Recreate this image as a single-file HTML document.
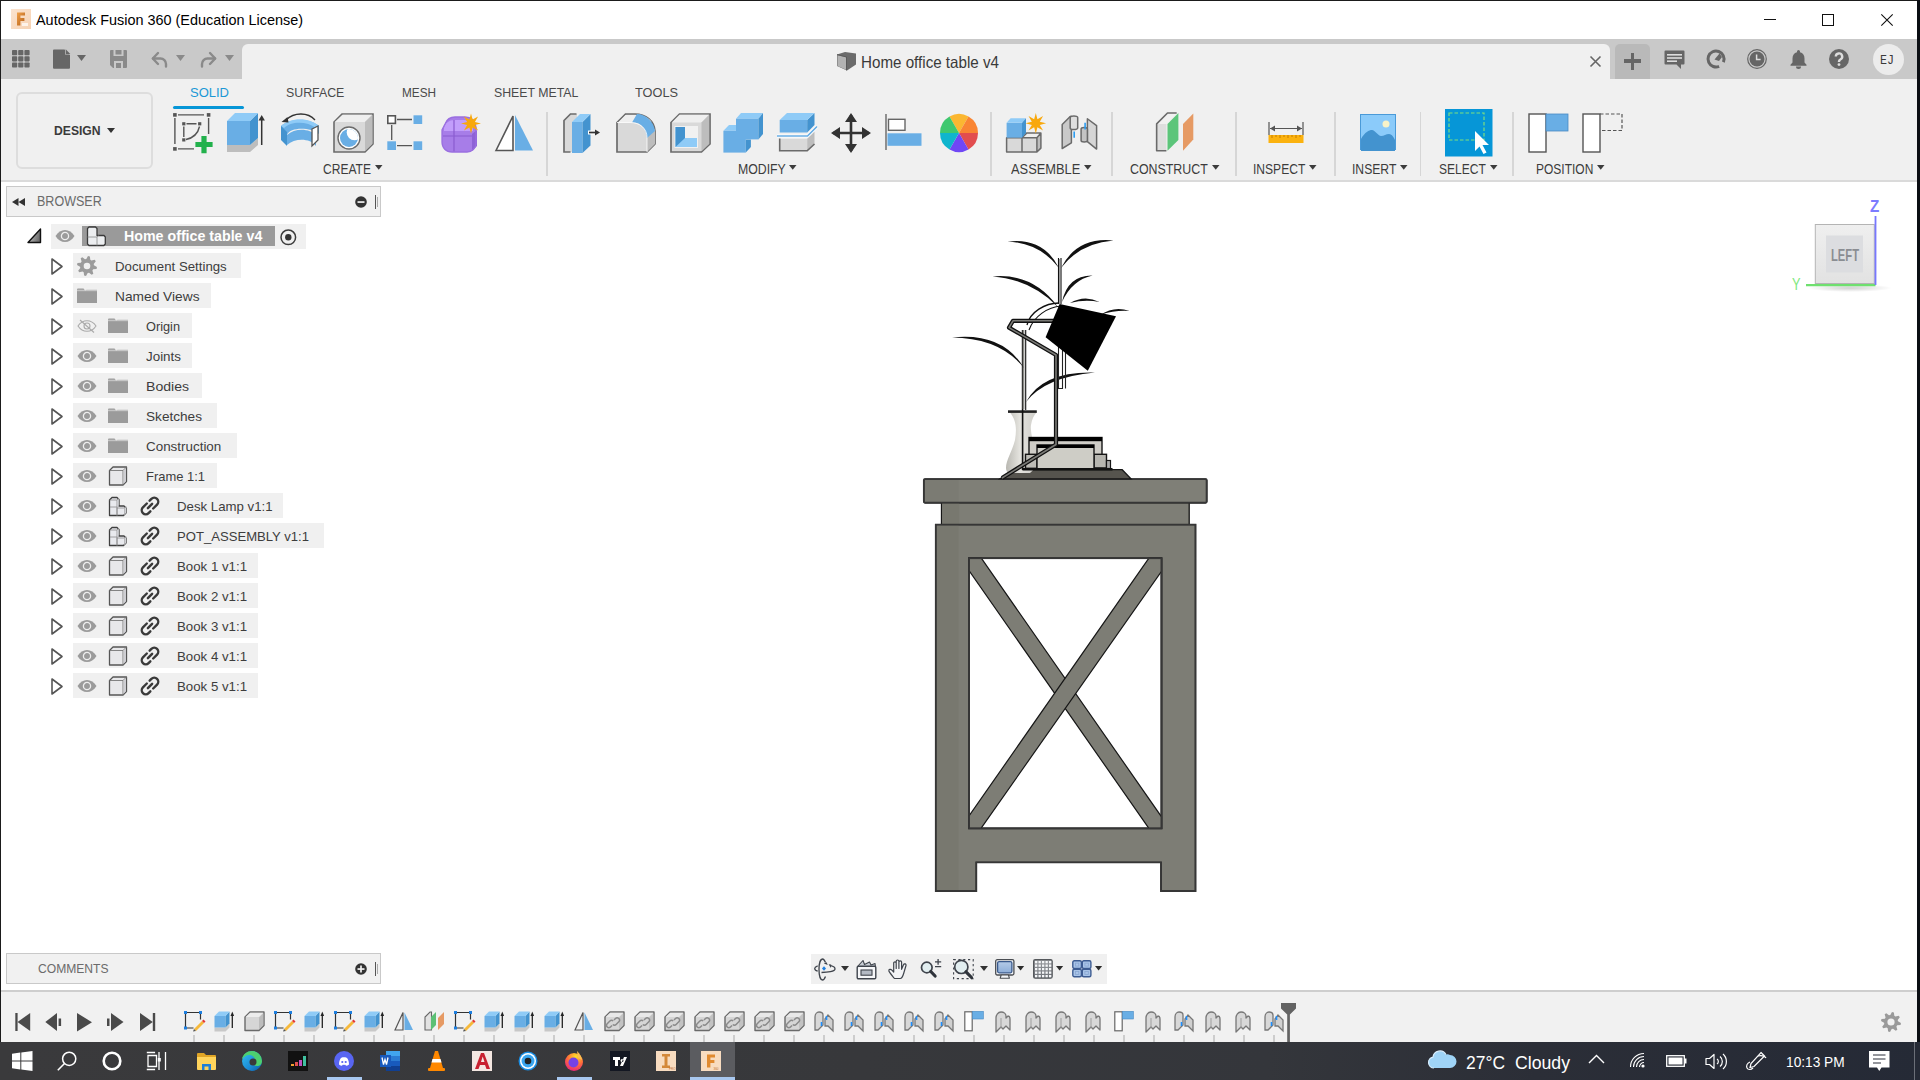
<!DOCTYPE html>
<html><head><meta charset="utf-8"><style>*{box-sizing:border-box;margin:0;padding:0}html,body{width:1920px;height:1080px;overflow:hidden;background:#fff;position:relative}svg{overflow:visible}</style></head><body>
<div style="position:absolute;left:0px;top:0px;width:1920px;height:1080px;background:#0b0e13"></div>
<div style="position:absolute;left:0px;top:0px;width:1917px;height:39px;background:#fff"></div>
<div style="position:absolute;left:0px;top:39px;width:1917px;height:40px;background:#c9c9c9"></div>
<div style="position:absolute;left:0px;top:79px;width:1917px;height:101px;background:#f0f0f0"></div>
<div style="position:absolute;left:0px;top:180px;width:1917px;height:2px;background:#dadada"></div>
<div style="position:absolute;left:0px;top:182px;width:1917px;height:808px;background:#fff"></div>
<div style="position:absolute;left:0px;top:990px;width:1917px;height:2px;background:#cecece"></div>
<div style="position:absolute;left:0px;top:992px;width:1917px;height:50px;background:#f1f1f1"></div>
<div style="position:absolute;left:0px;top:0px;width:1917px;height:1px;background:#1b1b1b"></div>
<div style="position:absolute;left:0px;top:0px;width:1px;height:1042px;background:#1b1b1b"></div>
<svg style="position:absolute;left:11px;top:9px;" width="20" height="20" viewBox="0 0 20 20"><defs><linearGradient id="fg" x1="0" y1="0" x2="1" y2="1"><stop offset="0" stop-color="#fbe3cf"/><stop offset="1" stop-color="#f6d2b3"/></linearGradient>
    <linearGradient id="fF" x1="0" y1="0" x2="1" y2="1"><stop offset="0" stop-color="#f0a04a"/><stop offset="1" stop-color="#b45f17"/></linearGradient></defs>
    <rect x="0" y="0" width="20" height="20" fill="url(#fg)"/>
    <path d="M6 3.5h8v3h-4.6v2.6h4v2.8h-4v4.6H6z" fill="url(#fF)"/>
    <rect x="11" y="14" width="6" height="3" fill="#fff" opacity=".7"/></svg>
<div style="position:absolute;left:36px;top:12.30px;font-family:'Liberation Sans',sans-serif;font-size:15px;line-height:15px;font-weight:400;color:#000;white-space:pre;transform:scaleX(0.9616);transform-origin:0 0;">Autodesk Fusion 360 (Education License)</div>
<div style="position:absolute;left:1764px;top:19px;width:12px;height:1.15px;background:#111"></div>
<div style="position:absolute;left:1822px;top:14px;width:12px;height:12px;border:1.1px solid #111"></div>
<svg style="position:absolute;left:1881px;top:14px;" width="12" height="12" viewBox="0 0 12 12"><path d="M0.3 0.3L11.7 11.7M11.7 0.3L0.3 11.7" stroke="#111" stroke-width="1.1"/></svg>
<svg style="position:absolute;left:12px;top:50px;" width="18" height="18" viewBox="0 0 18 18"><rect x="0.0" y="0.0" width="5.2" height="5.2" rx="0.8" fill="#666"/><rect x="6.2" y="0.0" width="5.2" height="5.2" rx="0.8" fill="#666"/><rect x="12.4" y="0.0" width="5.2" height="5.2" rx="0.8" fill="#666"/><rect x="0.0" y="6.2" width="5.2" height="5.2" rx="0.8" fill="#666"/><rect x="6.2" y="6.2" width="5.2" height="5.2" rx="0.8" fill="#666"/><rect x="12.4" y="6.2" width="5.2" height="5.2" rx="0.8" fill="#666"/><rect x="0.0" y="12.4" width="5.2" height="5.2" rx="0.8" fill="#666"/><rect x="6.2" y="12.4" width="5.2" height="5.2" rx="0.8" fill="#666"/><rect x="12.4" y="12.4" width="5.2" height="5.2" rx="0.8" fill="#666"/></svg>
<svg style="position:absolute;left:53px;top:49px;" width="18" height="20" viewBox="0 0 18 20"><path d="M1 0.5h10.5l5.5 5.5v12.8a1 1 0 0 1-1 1H1a1 1 0 0 1-1-1V1.5a1 1 0 0 1 1-1z" fill="#666"/><path d="M12 0.5v5h5z" fill="#c9c9c9"/><path d="M12.7 0.3l4.6 4.6h-4.6z" fill="#666"/></svg>
<svg style="position:absolute;left:77px;top:55px;" width="9" height="6" viewBox="0 0 9 6"><path d="M0 0h9L4.5 6z" fill="#666"/></svg>
<svg style="position:absolute;left:110px;top:50px;" width="17" height="18" viewBox="0 0 17 18"><path d="M0 1a1 1 0 0 1 1-1h15a1 1 0 0 1 1 1v16a1 1 0 0 1-1 1H3L0 15z" fill="#8a8a8a"/><rect x="3.5" y="0" width="10" height="6" fill="#c9c9c9"/><rect x="5.5" y="0" width="6" height="4.5" fill="#8a8a8a"/><rect x="4" y="11" width="9" height="7" fill="#c9c9c9"/><rect x="6" y="13" width="5" height="5" fill="#8a8a8a"/></svg>
<svg style="position:absolute;left:151px;top:51px;" width="17" height="16" viewBox="0 0 17 16"><path d="M2 7.5h7.5a5.5 5.5 0 0 1 5.5 5.5v2.5" fill="none" stroke="#8a8a8a" stroke-width="2.4" stroke-linecap="round"/><path d="M7 2L1.8 7.5L7 13" fill="none" stroke="#8a8a8a" stroke-width="2.4" stroke-linecap="round" stroke-linejoin="round"/></svg>
<svg style="position:absolute;left:176px;top:55px;" width="9" height="6" viewBox="0 0 9 6"><path d="M0 0h9L4.5 6z" fill="#8a8a8a"/></svg>
<svg style="position:absolute;left:200px;top:51px;" width="17" height="16" viewBox="0 0 17 16"><path d="M15 7.5H7.5A5.5 5.5 0 0 0 2 13v2.5" fill="none" stroke="#8a8a8a" stroke-width="2.4" stroke-linecap="round"/><path d="M10 2l5.2 5.5L10 13" fill="none" stroke="#8a8a8a" stroke-width="2.4" stroke-linecap="round" stroke-linejoin="round"/></svg>
<svg style="position:absolute;left:225px;top:55px;" width="9" height="6" viewBox="0 0 9 6"><path d="M0 0h9L4.5 6z" fill="#8a8a8a"/></svg>
<div style="position:absolute;left:242px;top:44px;width:1368px;height:35px;background:#f0f0f0;border-radius:6px 6px 0 0"></div>
<svg style="position:absolute;left:836px;top:51px;" width="21" height="20" viewBox="0 0 21 20"><path d="M1 3.5L9 1l11 1.5v11L11 19.5 1 15z" fill="#6b6b6b"/><path d="M1.5 4.2L10 6.3v12.5L1.5 15z" fill="#b3b3b3"/><path d="M1 3.5L10.5 6v13.5" fill="none" stroke="#555" stroke-width="0.8"/></svg>
<div style="position:absolute;left:861px;top:54.03px;font-family:'Liberation Sans',sans-serif;font-size:16.5px;line-height:16.5px;font-weight:400;color:#3a3a3a;white-space:pre;transform:scaleX(0.9192);transform-origin:0 0;">Home office table v4</div>
<svg style="position:absolute;left:1590px;top:56px;" width="11" height="11" viewBox="0 0 11 11"><path d="M0.5 0.5L10.5 10.5M10.5 0.5L0.5 10.5" stroke="#666" stroke-width="1.6"/></svg>
<div style="position:absolute;left:1615px;top:44px;width:35px;height:35px;background:#b9b9b9;border-radius:5px 5px 0 0"></div>
<div style="position:absolute;left:1624px;top:59px;width:17px;height:3.6px;background:#666"></div>
<div style="position:absolute;left:1630.7px;top:52.5px;width:3.6px;height:17px;background:#666"></div>
<svg style="position:absolute;left:1664px;top:50px;" width="21" height="20" viewBox="0 0 21 20"><path d="M0.5 1.5a1 1 0 0 1 1-1h18a1 1 0 0 1 1 1v12a1 1 0 0 1-1 1H17l0 4.5-4.5-4.5H1.5a1 1 0 0 1-1-1z" fill="#666"/><rect x="3" y="4" width="15" height="1.6" fill="#ddd"/><rect x="3" y="7.2" width="15" height="1.6" fill="#ddd"/><rect x="3" y="10.4" width="10" height="1.6" fill="#ddd"/></svg>
<svg style="position:absolute;left:1706px;top:49px;" width="20" height="20" viewBox="0 0 20 20"><circle cx="10" cy="10" r="8" fill="none" stroke="#666" stroke-width="3" stroke-dasharray="38 6" transform="rotate(110 10 10)"/><path d="M8.5 10.5l5-6 2.5 3.5-3 4z" fill="#666"/></svg>
<svg style="position:absolute;left:1747px;top:49px;" width="20" height="20" viewBox="0 0 20 20"><circle cx="10" cy="10" r="9.3" fill="none" stroke="#666" stroke-width="1.2"/><circle cx="10" cy="10" r="7.5" fill="#666"/><path d="M9.6 5.5v5h4" fill="none" stroke="#ddd" stroke-width="1.5"/></svg>
<svg style="position:absolute;left:1790px;top:49px;" width="17" height="20" viewBox="0 0 17 20"><path d="M8.5 1a1.5 1.5 0 0 1 1.5 1.5v0.7c3 .7 4.5 3.2 4.5 6.3v4l2 2.3v1H0.5v-1l2-2.3v-4c0-3.1 1.5-5.6 4.5-6.3V2.5A1.5 1.5 0 0 1 8.5 1z" fill="#666"/><path d="M6 17.5h5a2.5 2.5 0 0 1-5 0z" fill="#666"/></svg>
<svg style="position:absolute;left:1829px;top:49px;" width="20" height="20" viewBox="0 0 20 20"><circle cx="10" cy="10" r="10" fill="#666"/><path d="M6.8 7.6a3.2 3.2 0 1 1 4.6 2.9c-.9.5-1.4 1-1.4 2v.6" fill="none" stroke="#ddd" stroke-width="2.4"/><circle cx="10" cy="15.6" r="1.4" fill="#ddd"/></svg>
<div style="position:absolute;left:1872.5px;top:43.5px;width:31px;height:31px;background:#ececec;border-radius:50%"></div>
<div style="position:absolute;left:1880px;top:54.00px;font-family:'Liberation Mono',sans-serif;font-size:13px;line-height:13px;font-weight:400;color:#3a3a3a;white-space:pre;transform:scaleX(0.8969);transform-origin:0 0;">EJ</div>
<div style="position:absolute;left:15.5px;top:92px;width:137px;height:76.5px;border:2px solid #dddddd;border-radius:6px"></div>
<div style="position:absolute;left:54px;top:123.57px;font-family:'Liberation Sans',sans-serif;font-size:13.5px;line-height:13.5px;font-weight:700;color:#3a3a3a;white-space:pre;transform:scaleX(0.9002);transform-origin:0 0;">DESIGN</div>
<svg style="position:absolute;left:107px;top:128px;" width="8" height="5" viewBox="0 0 8 5"><path d="M0 0h8L4 5z" fill="#333"/></svg>
<div style="position:absolute;left:190px;top:85.87px;font-family:'Liberation Sans',sans-serif;font-size:13.5px;line-height:13.5px;font-weight:400;color:#1b98d6;white-space:pre;transform:scaleX(0.9626);transform-origin:0 0;">SOLID</div>
<div style="position:absolute;left:173px;top:106px;width:71px;height:3px;background:#0696d7;border-radius:1.5px"></div>
<div style="position:absolute;left:286.2px;top:85.87px;font-family:'Liberation Sans',sans-serif;font-size:13.5px;line-height:13.5px;font-weight:400;color:#4a4a4a;white-space:pre;transform:scaleX(0.9143);transform-origin:0 0;">SURFACE</div>
<div style="position:absolute;left:402.4px;top:85.87px;font-family:'Liberation Sans',sans-serif;font-size:13.5px;line-height:13.5px;font-weight:400;color:#4a4a4a;white-space:pre;transform:scaleX(0.8714);transform-origin:0 0;">MESH</div>
<div style="position:absolute;left:493.75px;top:85.87px;font-family:'Liberation Sans',sans-serif;font-size:13.5px;line-height:13.5px;font-weight:400;color:#4a4a4a;white-space:pre;transform:scaleX(0.9110);transform-origin:0 0;">SHEET METAL</div>
<div style="position:absolute;left:635px;top:85.87px;font-family:'Liberation Sans',sans-serif;font-size:13.5px;line-height:13.5px;font-weight:400;color:#4a4a4a;white-space:pre;transform:scaleX(0.9444);transform-origin:0 0;">TOOLS</div>
<div style="position:absolute;left:322.5px;top:162.25px;font-family:'Liberation Sans',sans-serif;font-size:14px;line-height:14px;font-weight:400;color:#3c3c3c;white-space:pre;transform:scaleX(0.8610);transform-origin:0 0;">CREATE</div>
<svg style="position:absolute;left:374.5px;top:165.3px;" width="7.5" height="4.8" viewBox="0 0 7.5 4.8"><path d="M0 0h7.5L3.75 4.8z" fill="#3c3c3c"/></svg>
<div style="position:absolute;left:737.5px;top:162.25px;font-family:'Liberation Sans',sans-serif;font-size:14px;line-height:14px;font-weight:400;color:#3c3c3c;white-space:pre;transform:scaleX(0.8778);transform-origin:0 0;">MODIFY</div>
<svg style="position:absolute;left:789.3px;top:165.3px;" width="7.5" height="4.8" viewBox="0 0 7.5 4.8"><path d="M0 0h7.5L3.75 4.8z" fill="#3c3c3c"/></svg>
<div style="position:absolute;left:1011px;top:162.25px;font-family:'Liberation Sans',sans-serif;font-size:14px;line-height:14px;font-weight:400;color:#3c3c3c;white-space:pre;transform:scaleX(0.9181);transform-origin:0 0;">ASSEMBLE</div>
<svg style="position:absolute;left:1084.3px;top:165.3px;" width="7.5" height="4.8" viewBox="0 0 7.5 4.8"><path d="M0 0h7.5L3.75 4.8z" fill="#3c3c3c"/></svg>
<div style="position:absolute;left:1130px;top:162.25px;font-family:'Liberation Sans',sans-serif;font-size:14px;line-height:14px;font-weight:400;color:#3c3c3c;white-space:pre;transform:scaleX(0.8852);transform-origin:0 0;">CONSTRUCT</div>
<svg style="position:absolute;left:1211.8px;top:165.3px;" width="7.5" height="4.8" viewBox="0 0 7.5 4.8"><path d="M0 0h7.5L3.75 4.8z" fill="#3c3c3c"/></svg>
<div style="position:absolute;left:1253px;top:162.25px;font-family:'Liberation Sans',sans-serif;font-size:14px;line-height:14px;font-weight:400;color:#3c3c3c;white-space:pre;transform:scaleX(0.8618);transform-origin:0 0;">INSPECT</div>
<svg style="position:absolute;left:1309.3px;top:165.3px;" width="7.5" height="4.8" viewBox="0 0 7.5 4.8"><path d="M0 0h7.5L3.75 4.8z" fill="#3c3c3c"/></svg>
<div style="position:absolute;left:1352px;top:162.25px;font-family:'Liberation Sans',sans-serif;font-size:14px;line-height:14px;font-weight:400;color:#3c3c3c;white-space:pre;transform:scaleX(0.8670);transform-origin:0 0;">INSERT</div>
<svg style="position:absolute;left:1400.3px;top:165.3px;" width="7.5" height="4.8" viewBox="0 0 7.5 4.8"><path d="M0 0h7.5L3.75 4.8z" fill="#3c3c3c"/></svg>
<div style="position:absolute;left:1439px;top:162.25px;font-family:'Liberation Sans',sans-serif;font-size:14px;line-height:14px;font-weight:400;color:#3c3c3c;white-space:pre;transform:scaleX(0.8592);transform-origin:0 0;">SELECT</div>
<svg style="position:absolute;left:1489.8px;top:165.3px;" width="7.5" height="4.8" viewBox="0 0 7.5 4.8"><path d="M0 0h7.5L3.75 4.8z" fill="#3c3c3c"/></svg>
<div style="position:absolute;left:1536px;top:162.25px;font-family:'Liberation Sans',sans-serif;font-size:14px;line-height:14px;font-weight:400;color:#3c3c3c;white-space:pre;transform:scaleX(0.8564);transform-origin:0 0;">POSITION</div>
<svg style="position:absolute;left:1597.3px;top:165.3px;" width="7.5" height="4.8" viewBox="0 0 7.5 4.8"><path d="M0 0h7.5L3.75 4.8z" fill="#3c3c3c"/></svg>
<div style="position:absolute;left:546.4px;top:112px;width:1.6px;height:64px;background:#d6d6d6"></div>
<div style="position:absolute;left:990.4px;top:112px;width:1.6px;height:64px;background:#d6d6d6"></div>
<div style="position:absolute;left:1111.4px;top:112px;width:1.6px;height:64px;background:#d6d6d6"></div>
<div style="position:absolute;left:1235.4px;top:112px;width:1.6px;height:64px;background:#d6d6d6"></div>
<div style="position:absolute;left:1334.4px;top:112px;width:1.6px;height:64px;background:#d6d6d6"></div>
<div style="position:absolute;left:1419.8px;top:112px;width:1.6px;height:64px;background:#d6d6d6"></div>
<div style="position:absolute;left:1512.4px;top:112px;width:1.6px;height:64px;background:#d6d6d6"></div>
<svg style="position:absolute;left:171.5px;top:111.5px;" width="42" height="42" viewBox="0 0 42 42"><g stroke="#555" stroke-width="1.4" fill="none"><path d="M6 2.9h26M2.9 6v26M36.6 6v16M6 36.9h16"/><path d="M14.5 11.8h10M11.8 14.5v10.5M14 27.5c7-1.5 12-6 13.5-13"/></g><rect x="1.0999999999999999" y="1.0999999999999999" width="3.6" height="3.6" fill="#555"/><rect x="34.800000000000004" y="1.0999999999999999" width="3.6" height="3.6" fill="#555"/><rect x="1.0999999999999999" y="35.1" width="3.6" height="3.6" fill="#555"/><rect x="10.200000000000001" y="10.200000000000001" width="3.2" height="3.2" fill="#555"/><rect x="26.099999999999998" y="10.200000000000001" width="3.2" height="3.2" fill="#555"/><rect x="10.200000000000001" y="26.299999999999997" width="3.2" height="3.2" fill="#555"/><path d="M32 24v17.2M23.4 32.5h17.2" stroke="#22b14c" stroke-width="5.2"/></svg>
<svg style="position:absolute;left:226px;top:112px;" width="42" height="42" viewBox="0 0 42 42"><path d="M1 33h23l8-7v7l-8 7H1z" fill="#bdbdbd"/><path d="M1 9h23v24H1z" fill="#69aee5"/><path d="M24 9l8-8v25l-8 7z" fill="#4393cf"/><path d="M1 9l8-8h23l-8 8z" fill="#8fcbf7"/><path d="M35.7 7v26" stroke="#333" stroke-width="1.5"/><path d="M32.5 8.5l3.2-5.5 3.2 5.5z" fill="#333"/></svg>
<svg style="position:absolute;left:280px;top:110px;" width="40" height="42" viewBox="0 0 40 42"><path d="M1 16c9-8 29-8 38 0l0 8c-9-7-29-7-32 1l0 10-6-6z" fill="#69aee5"/><path d="M1 16c10-9 28-9 38 0l-3 2c-9-7-25-7-32 0z" fill="#8fcbf7"/><path d="M1 16l6 6v14l-6-6z" fill="#4393cf"/><path d="M7 25c8-7 23-7 29 1v10c-6-8-21-8-29-1z" fill="#69aee5"/><path d="M32 19l6-3v14l-6 6z" fill="#fff" stroke="#555" stroke-width="1.3"/><path d="M6 10c8-8 22-8 29 0" fill="none" stroke="#333" stroke-width="1.3"/><path d="M1.5 12l6-5 1 5.5z" fill="#333"/></svg>
<svg style="position:absolute;left:332.5px;top:112.5px;" width="41" height="41" viewBox="0 0 41 41"><path d="M1 39V9l8-8h31v30l-8 8z" fill="#d9d9d9" stroke="#6b6b6b" stroke-width="1.6"/><path d="M1.8 9l8-7.2h29.4l-7.5 7.2z" fill="#efefef"/><path d="M32 9l7.5-7.2v29l-7.5 7.3z" fill="#bdbdbd"/><circle cx="16" cy="25" r="11" fill="#fff" stroke="#6b6b6b" stroke-width="1.4"/><clipPath id="hc"><circle cx="16" cy="25" r="9"/></clipPath><circle cx="16" cy="25" r="9" fill="#69aee5"/><circle cx="21.5" cy="19.5" r="7.8" fill="#fff" clip-path="url(#hc)"/></svg>
<svg style="position:absolute;left:387px;top:115px;" width="36" height="36" viewBox="0 0 36 36"><rect x="0.8" y="0.8" width="7.6" height="7.6" fill="#fff" stroke="#555" stroke-width="1.6"/><rect x="26.5" y="0.3" width="8.7" height="8.7" fill="#69aee5"/><rect x="0.3" y="26.3" width="8.7" height="8.7" fill="#69aee5"/><rect x="26.5" y="26.3" width="8.7" height="8.7" fill="#69aee5"/><path d="M10 4.5h15M4.7 10v15M10 30.7h15" stroke="#555" stroke-width="1.3"/></svg>
<svg style="position:absolute;left:440.5px;top:115px;" width="40" height="38" viewBox="0 0 40 38"><path d="M4 9c2-5 5-7 10-7h10c6 0 10 4 11 10v17c0 4-4 8-9 8H11c-6 0-10-4-10-10V15z" fill="#a77de8"/><path d="M3 13c1-5 5-8 11-8h9c5 0 9 3 9 8v3H3z" fill="#c9a6ff" opacity=".8"/><path d="M13 5v32M2 21h31" stroke="#8a5cd0" stroke-width="1.2"/><path d="M31 19l5-4v16l-5 5z" fill="#8e63d6"/><path d="M4 9c2-5 5-7 10-7h10c6 0 10 4 11 10v17c0 4-4 8-9 8H11c-6 0-10-4-10-10V15z" fill="none" stroke="#9a6fe0" stroke-width="1.3"/><polygon points="30.00,-1.50 31.61,4.62 37.07,1.43 33.88,6.89 40.00,8.50 33.88,10.11 37.07,15.57 31.61,12.38 30.00,18.50 28.39,12.38 22.93,15.57 26.12,10.11 20.00,8.50 26.12,6.89 22.93,1.43 28.39,4.62" fill="#f8a80c"/></svg>
<svg style="position:absolute;left:495px;top:114.5px;" width="39" height="37" viewBox="0 0 39 37"><path d="M1 35.5L18 1v34.5z" fill="#fff" stroke="#555" stroke-width="1.6" stroke-linejoin="miter"/><path d="M20 0v35.5h18z" fill="#69aee5"/></svg>
<svg style="position:absolute;left:563px;top:113px;" width="40" height="41" viewBox="0 0 40 41"><path d="M1 39V7.5L7.5 1H14v38z" fill="#d9d9d9"/><path d="M7.5 39H1V7.5L7.5 1H13.5" fill="none" stroke="#6b6b6b" stroke-width="1.7"/><path d="M9 9h10.5v31H9z" fill="#69aee5"/><path d="M19.5 9L27.5 1v31.5L19.5 40z" fill="#4393cf"/><path d="M9 9l8-8h10.5l-8 8z" fill="#8fcbf7"/><path d="M25 19.5h8" stroke="#fff" stroke-width="4"/><path d="M26 19.5h7" stroke="#333" stroke-width="1.7"/><path d="M32 16.5l5 3-5 3z" fill="#333"/></svg>
<svg style="position:absolute;left:616px;top:113px;" width="40" height="41" viewBox="0 0 40 41"><path d="M1 39V9.5L9.5 1h9.5c11 0 19 7 20 17v13l-8 8z" fill="#d9d9d9" stroke="#6b6b6b" stroke-width="1.7"/><path d="M2 9.5L9.5 2h9.5c9 0 14 3 16.5 7" fill="#efefef"/><path d="M31 23l8-7v15l-8 8z" fill="#bdbdbd"/><path d="M16 9.5C25 9 30 15 31 25l8-7C38 9 30 1 21 1l-5 8.5z" fill="#69aee5"/><path d="M1 9.5h13c10 0 17 6 17 15V39" fill="none" stroke="#fff" stroke-width="0.8"/></svg>
<svg style="position:absolute;left:669.5px;top:113px;" width="41" height="41" viewBox="0 0 41 41"><path d="M1 39V9.5L9.5 1H40v30l-8.5 8z" fill="#d9d9d9" stroke="#6b6b6b" stroke-width="1.7"/><path d="M1.8 9.5L9.5 1.8h29.5l-7.5 7.7z" fill="#efefef"/><path d="M31.5 9.5L39.2 1.8v29L31.5 38.3z" fill="#bdbdbd"/><rect x="4.5" y="13" width="23.5" height="22" fill="#f1f1f1"/><path d="M5.5 14h9.5v11h12v9H5.5z" fill="#8fcbf7"/><path d="M5.5 14h9.5v11L5.5 34z" fill="#4393cf"/></svg>
<svg style="position:absolute;left:723px;top:113px;" width="41" height="41" viewBox="0 0 41 41"><path d="M0.4 17.8l5.6-5.8h7v5.8z" fill="#8fcbf7"/><path d="M0.4 17.8h22.4v21.8H0.4z" fill="#69aee5"/><path d="M22.8 26.4h5.1v7.6l-5.1 5.6z" fill="#4393cf"/><path d="M13 5.75L18 0h22l-4.6 5.75z" fill="#8fcbf7"/><path d="M13 5.75h22.4v20.65H13z" fill="#69aee5"/><path d="M35.4 5.75L40 0v21l-4.6 5.4z" fill="#4393cf"/></svg>
<svg style="position:absolute;left:777px;top:113px;" width="41" height="41" viewBox="0 0 41 41"><path d="M2.7 25.8h27.5v12H2.7z" fill="#d9d9d9"/><path d="M30.2 25.8l7.3-7.3v12.5l-7.3 6.8z" fill="#bdbdbd"/><path d="M2.7 25.5v12.3h27.5l7.3-6.8" fill="none" stroke="#6b6b6b" stroke-width="1.6"/><path d="M2.7 7h27.5v12.5H2.7z" fill="#69aee5"/><path d="M30.2 7L37.5 0v12l-7.3 7.5z" fill="#4393cf"/><path d="M2.7 7L10 0h27.5l-7.3 7z" fill="#8fcbf7"/><path d="M0 23h30.5l9.5-9.5" fill="none" stroke="#fff" stroke-width="3.2"/><path d="M0 23h30.5l9.5-9.5" fill="none" stroke="#69aee5" stroke-width="1.7"/></svg>
<svg style="position:absolute;left:831px;top:113px;" width="40" height="40" viewBox="0 0 40 40"><path d="M20 2v36M2 20h36" stroke="#333" stroke-width="2.6"/><path d="M20 0l-6 9h12zM20 40l-6-9h12zM0 20l9-6v12zM40 20l-9-6v12z" fill="#333"/></svg>
<svg style="position:absolute;left:885px;top:114px;" width="38" height="37" viewBox="0 0 38 37"><path d="M1 0v36" stroke="#666" stroke-width="1.4"/><rect x="3.5" y="5.3" width="16.5" height="11" fill="#fff" stroke="#666" stroke-width="1.4"/><rect x="2.5" y="19.3" width="34" height="12.5" fill="#69aee5"/></svg>
<svg style="position:absolute;left:939.5px;top:114px;" width="38" height="38" viewBox="0 0 38 38"><path d="M19 19L9.50 2.55A19 19 0 0 1 28.50 2.55z" fill="#fbb731"/><path d="M19 19L28.50 2.55A19 19 0 0 1 38.00 19.00z" fill="#f98533"/><path d="M19 19L38.00 19.00A19 19 0 0 1 28.50 35.45z" fill="#e24d4f"/><path d="M19 19L28.50 35.45A19 19 0 0 1 9.50 35.45z" fill="#7047f5"/><path d="M19 19L9.50 35.45A19 19 0 0 1 0.00 19.00z" fill="#0fb5cd"/><path d="M19 19L0.00 19.00A19 19 0 0 1 9.50 2.55z" fill="#3fc86f"/></svg>
<svg style="position:absolute;left:1005.5px;top:113px;" width="41" height="41" viewBox="0 0 41 41"><path d="M0.6 24.7h15.4V39H0.6z" fill="#d9d9d9"/><path d="M16 24.7h14.9V39H16z" fill="#d9d9d9"/><path d="M16 24.7l4.6-4.6h14.3l-4 4.6z" fill="#efefef"/><path d="M30.9 24.7l4-4.6v15l-4 3.9z" fill="#bdbdbd"/><path d="M0.6 24.7V39h30.3l4-3.9V20.1H20.6L16 24.7zM16 24.7V39M16 24.7h14.9V39M30.9 24.7l4-4.6" fill="none" stroke="#6b6b6b" stroke-width="1.5" stroke-linejoin="round"/><path d="M0.6 9.8h15.4v14.9H0.6z" fill="#69aee5"/><path d="M0.6 9.8l4-4.6H20l-4 4.6z" fill="#8fcbf7"/><path d="M16 9.8l4-4.6v14.9l-4 4.6z" fill="#4393cf"/><polygon points="29.80,0.00 31.45,6.33 37.08,3.02 33.77,8.65 40.10,10.30 33.77,11.95 37.08,17.58 31.45,14.27 29.80,20.60 28.15,14.27 22.52,17.58 25.83,11.95 19.50,10.30 25.83,8.65 22.52,3.02 28.15,6.33" fill="#f8a80c"/></svg>
<svg style="position:absolute;left:1062px;top:114px;" width="36" height="38" viewBox="0 0 36 38"><path d="M0.2 10.5L8.2 2.5H9.4V28.8L0.2 34.5z" fill="#c9c9c9" stroke="#6a6a6a" stroke-width="1.5" stroke-linejoin="round"/><path d="M8.2 3.5a3.75 1.6 0 0 1 7.5 0V14a3.75 1.6 0 0 1-7.5 0z" fill="#dedede" stroke="#6a6a6a" stroke-width="1.5"/><path d="M25.4 4.75L34.6 11.6V35.1L25.4 27.7z" fill="#d6d6d6" stroke="#6a6a6a" stroke-width="1.5" stroke-linejoin="round"/><path d="M19.1 15a3.15 1.5 0 0 1 6.3 0V26.6a3.15 1.5 0 0 1-6.3 0z" fill="#c4c4c4" stroke="#6a6a6a" stroke-width="1.5"/><path d="M12.2 17.4v6.3M23.1 8.8v6.8" stroke="#2c9cf0" stroke-width="1.6"/></svg>
<svg style="position:absolute;left:1155.5px;top:113px;" width="39" height="40" viewBox="0 0 39 40"><path d="M0.65 10.9h9.75v26.9H0.65z" fill="#dedede"/><path d="M0.65 10.9L11.5 0h9.2L10.4 10.9z" fill="#f1f1f1"/><path d="M10.4 37.8H0.65V10.9L11.5 0h9.2" fill="none" stroke="#6a6a6a" stroke-width="1.6" stroke-linejoin="round"/><path d="M11.5 10.9L22.4 0v27L11.5 37.8z" fill="#5cc57a"/><path d="M27 10.9L37.3 0.6v25.8L27 37.8z" fill="#e69a64"/></svg>
<svg style="position:absolute;left:1268px;top:122px;" width="36" height="22" viewBox="0 0 36 22"><path d="M1 0v13M35 0v13M2 6.5h32" stroke="#555" stroke-width="1.2"/><path d="M2 6.5l5-3v6zM34 6.5l-5-3v6z" fill="#555"/><rect x="0.5" y="13" width="35" height="8" fill="#fbb20f"/><path d="M4 13v3M8 13v2M12 13v3M16 13v2M20 13v3M24 13v2M28 13v3M32 13v2" stroke="#c77c00" stroke-width="1"/></svg>
<svg style="position:absolute;left:1359.5px;top:114px;" width="36" height="36" viewBox="0 0 36 36"><rect x="0" y="0" width="36" height="36" fill="#4a9ad8"/><rect x="1" y="1" width="34" height="34" fill="#8bcbfa"/><circle cx="26" cy="10" r="3.5" fill="#f7f3c9"/><path d="M1 25c4-7 8-9 11-9s6 6 9 6 5-2 8-2 5 4 6 6v11H1z" fill="#4393cf"/></svg>
<svg style="position:absolute;left:1444.5px;top:109px;" width="48" height="48" viewBox="0 0 48 48"><rect x="0" y="0" width="47.5" height="47.5" fill="#0696d7"/><rect x="4" y="4" width="35" height="27" fill="none" stroke="#7fe07f" stroke-width="1.2" stroke-dasharray="3.5 2"/><path d="M30 22v20l4.5-4.5 4 7.5 3-1.5-4-7.5h6.5z" fill="#fff"/></svg>
<svg style="position:absolute;left:1528px;top:113px;" width="41" height="41" viewBox="0 0 41 41"><rect x="1" y="1" width="17" height="38" fill="#fff" stroke="#555" stroke-width="1.4"/><rect x="18" y="1" width="22" height="17" fill="#69aee5" stroke="#4a8ac4" stroke-width="0.8"/></svg>
<svg style="position:absolute;left:1582px;top:113px;" width="41" height="41" viewBox="0 0 41 41"><rect x="1" y="1" width="17" height="38" fill="#fff" stroke="#555" stroke-width="1.4"/><path d="M18 1h22v16.5H18" fill="none" stroke="#555" stroke-width="1.2" stroke-dasharray="3.5 2"/></svg>
<div style="position:absolute;left:6px;top:186px;width:375px;height:31px;background:#f1f1f1;border:1px solid #c9c9c9"></div>
<svg style="position:absolute;left:12px;top:198px;" width="13" height="8" viewBox="0 0 13 8"><path d="M0 4L6.5 0v8zM6.5 4L13 0v8z" fill="#333"/></svg>
<div style="position:absolute;left:37.3px;top:194.45px;font-family:'Liberation Sans',sans-serif;font-size:14px;line-height:14px;font-weight:400;color:#6b6b6b;white-space:pre;transform:scaleX(0.8943);transform-origin:0 0;">BROWSER</div>
<svg style="position:absolute;left:354.5px;top:195.5px;" width="12" height="12" viewBox="0 0 12 12"><circle cx="6" cy="6" r="5.8" fill="#333"/><rect x="2.5" y="5.2" width="7" height="1.7" fill="#f1f1f1"/></svg>
<div style="position:absolute;left:375px;top:195px;width:1px;height:13.5px;background:#555"></div>
<div style="position:absolute;left:377.3px;top:197px;width:1.2px;height:9.5px;background:#aaa"></div>
<div style="position:absolute;left:51px;top:224px;width:255px;height:24.5px;background:#f0f0f0"></div>
<svg style="position:absolute;left:27px;top:228px;" width="14.5" height="15.5" viewBox="0 0 14.5 15.5"><defs><linearGradient id="tg" x1="0" y1="0" x2="1" y2="0.3"><stop offset="0" stop-color="#cfcfcf"/><stop offset="1" stop-color="#6f6f6f"/></linearGradient></defs><path d="M13.5 1v13.5H1z" fill="url(#tg)" stroke="#111" stroke-width="1.4" stroke-linejoin="round"/></svg>
<svg style="position:absolute;left:55px;top:230px;" width="20" height="12" viewBox="0 0 20 12"><path d="M0.5 6C3 2 6.3 0 10 0s7 2 9.5 6c-2.5 4-5.8 6-9.5 6S3 10 0.5 6z" fill="#9b9b9b"/><circle cx="10" cy="6" r="3.6" fill="none" stroke="#eee" stroke-width="1.3"/><circle cx="10" cy="6" r="2.2" fill="#9b9b9b"/></svg>
<div style="position:absolute;left:82px;top:226px;width:193px;height:20px;background:#9a9a9a"></div>
<svg style="position:absolute;left:86px;top:226px;" width="20" height="20" viewBox="0 0 20 20"><path d="M1.5 2.5L3 1h6.5l1.5 1.5v7H18l1.3 1.5V18l-1.5 1.5H3L1.5 18z" fill="#eceef0" stroke="#3a3a3a" stroke-width="1.3" stroke-linejoin="round"/><path d="M1.5 11h9.5V19.5M11 11l1.5-1.5" fill="none" stroke="#888" stroke-width="0.8"/></svg>
<div style="position:absolute;left:124px;top:229.45px;font-family:'Liberation Sans',sans-serif;font-size:14px;line-height:14px;font-weight:700;color:#fff;white-space:pre;transform:scaleX(1.0157);transform-origin:0 0;">Home office table v4</div>
<svg style="position:absolute;left:279.5px;top:228.5px;" width="17" height="17" viewBox="0 0 17 17"><circle cx="8.3" cy="8.3" r="7.3" fill="none" stroke="#3c3c3c" stroke-width="1.5"/><circle cx="8.3" cy="8.3" r="3.2" fill="#333"/></svg>
<div style="position:absolute;left:73.3px;top:253.3px;width:167.39999999999998px;height:25px;background:#f0f0f0"></div>
<svg style="position:absolute;left:50.5px;top:257.5px;" width="12.5" height="17" viewBox="0 0 12.5 17"><path d="M1 1l10 7.5L1 16z" fill="#fff" stroke="#555" stroke-width="1.6" stroke-linejoin="round"/></svg>
<svg style="position:absolute;left:77px;top:256px;" width="20" height="20" viewBox="0 0 20 20"><polygon points="19.95,10.98 19.57,12.90 16.17,13.30 15.41,14.44 16.34,17.73 14.71,18.82 12.03,16.70 10.69,16.97 9.02,19.95 7.10,19.57 6.70,16.17 5.56,15.41 2.27,16.34 1.18,14.71 3.30,12.03 3.03,10.69 0.05,9.02 0.43,7.10 3.83,6.70 4.59,5.56 3.66,2.27 5.29,1.18 7.97,3.30 9.31,3.03 10.98,0.05 12.90,0.43 13.30,3.83 14.44,4.59 17.73,3.66 18.82,5.29 16.70,7.97 16.97,9.31" fill="#9b9b9b"/><circle cx="10" cy="10" r="3.3" fill="#f0f0f0"/></svg>
<div style="position:absolute;left:115px;top:259.70px;font-family:'Liberation Sans',sans-serif;font-size:13px;line-height:13px;font-weight:400;color:#3d3d3d;white-space:pre;transform:scaleX(1.0169);transform-origin:0 0;">Document Settings</div>
<div style="position:absolute;left:73.3px;top:283.3px;width:137.39999999999998px;height:25px;background:#f0f0f0"></div>
<svg style="position:absolute;left:50.5px;top:287.5px;" width="12.5" height="17" viewBox="0 0 12.5 17"><path d="M1 1l10 7.5L1 16z" fill="#fff" stroke="#555" stroke-width="1.6" stroke-linejoin="round"/></svg>
<svg style="position:absolute;left:77px;top:287px;" width="20" height="16" viewBox="0 0 20 16"><path d="M0 2.5a1 1 0 0 1 1-1h5.5l1.5 2H20v1H0z" fill="#9b9b9b"/><rect x="0" y="4.2" width="20" height="11.8" fill="#9b9b9b"/><path d="M0 3.3h8.5l1-0.8H20" stroke="#ddd" stroke-width="0.8" fill="none"/></svg>
<div style="position:absolute;left:115px;top:289.70px;font-family:'Liberation Sans',sans-serif;font-size:13px;line-height:13px;font-weight:400;color:#3d3d3d;white-space:pre;transform:scaleX(1.0567);transform-origin:0 0;">Named Views</div>
<div style="position:absolute;left:73.3px;top:313.3px;width:118.7px;height:25px;background:#f0f0f0"></div>
<svg style="position:absolute;left:50.5px;top:317.5px;" width="12.5" height="17" viewBox="0 0 12.5 17"><path d="M1 1l10 7.5L1 16z" fill="#fff" stroke="#555" stroke-width="1.6" stroke-linejoin="round"/></svg>
<svg style="position:absolute;left:77px;top:320px;" width="20" height="12" viewBox="0 0 20 12"><path d="M1 6C3.5 2.2 6.5 0.7 10 0.7s6.5 1.5 9 5.3c-2.5 3.8-5.5 5.3-9 5.3S3.5 9.8 1 6z" fill="none" stroke="#aaa" stroke-width="1.1"/><circle cx="10" cy="6" r="3" fill="none" stroke="#aaa" stroke-width="1.1"/><path d="M3 0l14 12.5" stroke="#aaa" stroke-width="1.1"/></svg>
<svg style="position:absolute;left:108px;top:317px;" width="20" height="16" viewBox="0 0 20 16"><path d="M0 2.5a1 1 0 0 1 1-1h5.5l1.5 2H20v1H0z" fill="#9b9b9b"/><rect x="0" y="4.2" width="20" height="11.8" fill="#9b9b9b"/><path d="M0 3.3h8.5l1-0.8H20" stroke="#ddd" stroke-width="0.8" fill="none"/></svg>
<div style="position:absolute;left:146px;top:319.70px;font-family:'Liberation Sans',sans-serif;font-size:13px;line-height:13px;font-weight:400;color:#3d3d3d;white-space:pre;transform:scaleX(0.9802);transform-origin:0 0;">Origin</div>
<div style="position:absolute;left:73.3px;top:343.3px;width:118.7px;height:25px;background:#f0f0f0"></div>
<svg style="position:absolute;left:50.5px;top:347.5px;" width="12.5" height="17" viewBox="0 0 12.5 17"><path d="M1 1l10 7.5L1 16z" fill="#fff" stroke="#555" stroke-width="1.6" stroke-linejoin="round"/></svg>
<svg style="position:absolute;left:77px;top:350px;" width="20" height="12" viewBox="0 0 20 12"><path d="M0.5 6C3 2 6.3 0 10 0s7 2 9.5 6c-2.5 4-5.8 6-9.5 6S3 10 0.5 6z" fill="#9b9b9b"/><circle cx="10" cy="6" r="3.6" fill="none" stroke="#eee" stroke-width="1.3"/><circle cx="10" cy="6" r="2.2" fill="#9b9b9b"/></svg>
<svg style="position:absolute;left:108px;top:347px;" width="20" height="16" viewBox="0 0 20 16"><path d="M0 2.5a1 1 0 0 1 1-1h5.5l1.5 2H20v1H0z" fill="#9b9b9b"/><rect x="0" y="4.2" width="20" height="11.8" fill="#9b9b9b"/><path d="M0 3.3h8.5l1-0.8H20" stroke="#ddd" stroke-width="0.8" fill="none"/></svg>
<div style="position:absolute;left:146px;top:349.70px;font-family:'Liberation Sans',sans-serif;font-size:13px;line-height:13px;font-weight:400;color:#3d3d3d;white-space:pre;transform:scaleX(1.0304);transform-origin:0 0;">Joints</div>
<div style="position:absolute;left:73.3px;top:373.3px;width:128.7px;height:25px;background:#f0f0f0"></div>
<svg style="position:absolute;left:50.5px;top:377.5px;" width="12.5" height="17" viewBox="0 0 12.5 17"><path d="M1 1l10 7.5L1 16z" fill="#fff" stroke="#555" stroke-width="1.6" stroke-linejoin="round"/></svg>
<svg style="position:absolute;left:77px;top:380px;" width="20" height="12" viewBox="0 0 20 12"><path d="M0.5 6C3 2 6.3 0 10 0s7 2 9.5 6c-2.5 4-5.8 6-9.5 6S3 10 0.5 6z" fill="#9b9b9b"/><circle cx="10" cy="6" r="3.6" fill="none" stroke="#eee" stroke-width="1.3"/><circle cx="10" cy="6" r="2.2" fill="#9b9b9b"/></svg>
<svg style="position:absolute;left:108px;top:377px;" width="20" height="16" viewBox="0 0 20 16"><path d="M0 2.5a1 1 0 0 1 1-1h5.5l1.5 2H20v1H0z" fill="#9b9b9b"/><rect x="0" y="4.2" width="20" height="11.8" fill="#9b9b9b"/><path d="M0 3.3h8.5l1-0.8H20" stroke="#ddd" stroke-width="0.8" fill="none"/></svg>
<div style="position:absolute;left:146px;top:379.70px;font-family:'Liberation Sans',sans-serif;font-size:13px;line-height:13px;font-weight:400;color:#3d3d3d;white-space:pre;transform:scaleX(1.0818);transform-origin:0 0;">Bodies</div>
<div style="position:absolute;left:73.3px;top:403.3px;width:143.39999999999998px;height:25px;background:#f0f0f0"></div>
<svg style="position:absolute;left:50.5px;top:407.5px;" width="12.5" height="17" viewBox="0 0 12.5 17"><path d="M1 1l10 7.5L1 16z" fill="#fff" stroke="#555" stroke-width="1.6" stroke-linejoin="round"/></svg>
<svg style="position:absolute;left:77px;top:410px;" width="20" height="12" viewBox="0 0 20 12"><path d="M0.5 6C3 2 6.3 0 10 0s7 2 9.5 6c-2.5 4-5.8 6-9.5 6S3 10 0.5 6z" fill="#9b9b9b"/><circle cx="10" cy="6" r="3.6" fill="none" stroke="#eee" stroke-width="1.3"/><circle cx="10" cy="6" r="2.2" fill="#9b9b9b"/></svg>
<svg style="position:absolute;left:108px;top:407px;" width="20" height="16" viewBox="0 0 20 16"><path d="M0 2.5a1 1 0 0 1 1-1h5.5l1.5 2H20v1H0z" fill="#9b9b9b"/><rect x="0" y="4.2" width="20" height="11.8" fill="#9b9b9b"/><path d="M0 3.3h8.5l1-0.8H20" stroke="#ddd" stroke-width="0.8" fill="none"/></svg>
<div style="position:absolute;left:146px;top:409.70px;font-family:'Liberation Sans',sans-serif;font-size:13px;line-height:13px;font-weight:400;color:#3d3d3d;white-space:pre;transform:scaleX(1.0470);transform-origin:0 0;">Sketches</div>
<div style="position:absolute;left:73.3px;top:433.3px;width:163.7px;height:25px;background:#f0f0f0"></div>
<svg style="position:absolute;left:50.5px;top:437.5px;" width="12.5" height="17" viewBox="0 0 12.5 17"><path d="M1 1l10 7.5L1 16z" fill="#fff" stroke="#555" stroke-width="1.6" stroke-linejoin="round"/></svg>
<svg style="position:absolute;left:77px;top:440px;" width="20" height="12" viewBox="0 0 20 12"><path d="M0.5 6C3 2 6.3 0 10 0s7 2 9.5 6c-2.5 4-5.8 6-9.5 6S3 10 0.5 6z" fill="#9b9b9b"/><circle cx="10" cy="6" r="3.6" fill="none" stroke="#eee" stroke-width="1.3"/><circle cx="10" cy="6" r="2.2" fill="#9b9b9b"/></svg>
<svg style="position:absolute;left:108px;top:437px;" width="20" height="16" viewBox="0 0 20 16"><path d="M0 2.5a1 1 0 0 1 1-1h5.5l1.5 2H20v1H0z" fill="#9b9b9b"/><rect x="0" y="4.2" width="20" height="11.8" fill="#9b9b9b"/><path d="M0 3.3h8.5l1-0.8H20" stroke="#ddd" stroke-width="0.8" fill="none"/></svg>
<div style="position:absolute;left:146px;top:439.70px;font-family:'Liberation Sans',sans-serif;font-size:13px;line-height:13px;font-weight:400;color:#3d3d3d;white-space:pre;transform:scaleX(1.0317);transform-origin:0 0;">Construction</div>
<div style="position:absolute;left:73.3px;top:463.3px;width:143.7px;height:25px;background:#f0f0f0"></div>
<svg style="position:absolute;left:50.5px;top:467.5px;" width="12.5" height="17" viewBox="0 0 12.5 17"><path d="M1 1l10 7.5L1 16z" fill="#fff" stroke="#555" stroke-width="1.6" stroke-linejoin="round"/></svg>
<svg style="position:absolute;left:77px;top:470px;" width="20" height="12" viewBox="0 0 20 12"><path d="M0.5 6C3 2 6.3 0 10 0s7 2 9.5 6c-2.5 4-5.8 6-9.5 6S3 10 0.5 6z" fill="#9b9b9b"/><circle cx="10" cy="6" r="3.6" fill="none" stroke="#eee" stroke-width="1.3"/><circle cx="10" cy="6" r="2.2" fill="#9b9b9b"/></svg>
<svg style="position:absolute;left:108px;top:466px;" width="20" height="20" viewBox="0 0 20 20"><path d="M1.5 4.5L5 1h13.5v14.5L15 19H1.5z" fill="#e8e8ea" stroke="#555" stroke-width="1.3" stroke-linejoin="round"/><path d="M1.5 4.5H15V19M15 4.5L18.5 1" fill="none" stroke="#777" stroke-width="0.9"/><path d="M15.5 5l2.5-2.8v12.8l-2.5 3z" fill="#cfcfd3"/></svg>
<div style="position:absolute;left:146px;top:469.70px;font-family:'Liberation Sans',sans-serif;font-size:13px;line-height:13px;font-weight:400;color:#3d3d3d;white-space:pre;transform:scaleX(0.9958);transform-origin:0 0;">Frame 1:1</div>
<div style="position:absolute;left:73.3px;top:493.3px;width:210.0px;height:25px;background:#f0f0f0"></div>
<svg style="position:absolute;left:50.5px;top:497.5px;" width="12.5" height="17" viewBox="0 0 12.5 17"><path d="M1 1l10 7.5L1 16z" fill="#fff" stroke="#555" stroke-width="1.6" stroke-linejoin="round"/></svg>
<svg style="position:absolute;left:77px;top:500px;" width="20" height="12" viewBox="0 0 20 12"><path d="M0.5 6C3 2 6.3 0 10 0s7 2 9.5 6c-2.5 4-5.8 6-9.5 6S3 10 0.5 6z" fill="#9b9b9b"/><circle cx="10" cy="6" r="3.6" fill="none" stroke="#eee" stroke-width="1.3"/><circle cx="10" cy="6" r="2.2" fill="#9b9b9b"/></svg>
<svg style="position:absolute;left:108px;top:496px;" width="20" height="21" viewBox="0 0 20 21"><path d="M1.5 19.5V4L4 1.5h5L11 3.5V10h5l2 2v5l-2.5 2.5z" fill="#e9eaee" stroke="#3f3f3f" stroke-width="1.3" stroke-linejoin="round"/><path d="M1.5 4H9v15.5M9 4l2-2M9 12h7.5l1.5-1.5M9 11.5V19.5M2 11h7M16.5 12v7" fill="none" stroke="#8a8a8a" stroke-width="0.8"/><path d="M9.3 4.3l1.5-1.5v7h-1.5z" fill="#cfd0d4"/><path d="M16.5 12.5l1.5-1.5v6l-1.5 2z" fill="#cfd0d4"/></svg>
<svg style="position:absolute;left:139.5px;top:496px;" width="20" height="20" viewBox="0 0 20 20"><g fill="none" stroke="#3a3a3a" stroke-width="2.4" stroke-linecap="round" transform="rotate(-45 10 10)"><path d="M9.5 6H4A4 4 0 0 0 4 14H6.5"/><path d="M13.5 6H16A4 4 0 0 1 16 14H10.5"/><path d="M7 10H13"/></g></svg>
<div style="position:absolute;left:177.2px;top:499.70px;font-family:'Liberation Sans',sans-serif;font-size:13px;line-height:13px;font-weight:400;color:#3d3d3d;white-space:pre;transform:scaleX(1.0177);transform-origin:0 0;">Desk Lamp v1:1</div>
<div style="position:absolute;left:73.3px;top:523.3px;width:250.3px;height:25px;background:#f0f0f0"></div>
<svg style="position:absolute;left:50.5px;top:527.5px;" width="12.5" height="17" viewBox="0 0 12.5 17"><path d="M1 1l10 7.5L1 16z" fill="#fff" stroke="#555" stroke-width="1.6" stroke-linejoin="round"/></svg>
<svg style="position:absolute;left:77px;top:530px;" width="20" height="12" viewBox="0 0 20 12"><path d="M0.5 6C3 2 6.3 0 10 0s7 2 9.5 6c-2.5 4-5.8 6-9.5 6S3 10 0.5 6z" fill="#9b9b9b"/><circle cx="10" cy="6" r="3.6" fill="none" stroke="#eee" stroke-width="1.3"/><circle cx="10" cy="6" r="2.2" fill="#9b9b9b"/></svg>
<svg style="position:absolute;left:108px;top:526px;" width="20" height="21" viewBox="0 0 20 21"><path d="M1.5 19.5V4L4 1.5h5L11 3.5V10h5l2 2v5l-2.5 2.5z" fill="#e9eaee" stroke="#3f3f3f" stroke-width="1.3" stroke-linejoin="round"/><path d="M1.5 4H9v15.5M9 4l2-2M9 12h7.5l1.5-1.5M9 11.5V19.5M2 11h7M16.5 12v7" fill="none" stroke="#8a8a8a" stroke-width="0.8"/><path d="M9.3 4.3l1.5-1.5v7h-1.5z" fill="#cfd0d4"/><path d="M16.5 12.5l1.5-1.5v6l-1.5 2z" fill="#cfd0d4"/></svg>
<svg style="position:absolute;left:139.5px;top:526px;" width="20" height="20" viewBox="0 0 20 20"><g fill="none" stroke="#3a3a3a" stroke-width="2.4" stroke-linecap="round" transform="rotate(-45 10 10)"><path d="M9.5 6H4A4 4 0 0 0 4 14H6.5"/><path d="M13.5 6H16A4 4 0 0 1 16 14H10.5"/><path d="M7 10H13"/></g></svg>
<div style="position:absolute;left:177.2px;top:529.70px;font-family:'Liberation Sans',sans-serif;font-size:13px;line-height:13px;font-weight:400;color:#3d3d3d;white-space:pre;transform:scaleX(1.0074);transform-origin:0 0;">POT_ASSEMBLY v1:1</div>
<div style="position:absolute;left:73.3px;top:553.3px;width:185.0px;height:25px;background:#f0f0f0"></div>
<svg style="position:absolute;left:50.5px;top:557.5px;" width="12.5" height="17" viewBox="0 0 12.5 17"><path d="M1 1l10 7.5L1 16z" fill="#fff" stroke="#555" stroke-width="1.6" stroke-linejoin="round"/></svg>
<svg style="position:absolute;left:77px;top:560px;" width="20" height="12" viewBox="0 0 20 12"><path d="M0.5 6C3 2 6.3 0 10 0s7 2 9.5 6c-2.5 4-5.8 6-9.5 6S3 10 0.5 6z" fill="#9b9b9b"/><circle cx="10" cy="6" r="3.6" fill="none" stroke="#eee" stroke-width="1.3"/><circle cx="10" cy="6" r="2.2" fill="#9b9b9b"/></svg>
<svg style="position:absolute;left:108px;top:556px;" width="20" height="20" viewBox="0 0 20 20"><path d="M1.5 4.5L5 1h13.5v14.5L15 19H1.5z" fill="#e8e8ea" stroke="#555" stroke-width="1.3" stroke-linejoin="round"/><path d="M1.5 4.5H15V19M15 4.5L18.5 1" fill="none" stroke="#777" stroke-width="0.9"/><path d="M15.5 5l2.5-2.8v12.8l-2.5 3z" fill="#cfcfd3"/></svg>
<svg style="position:absolute;left:139.5px;top:556px;" width="20" height="20" viewBox="0 0 20 20"><g fill="none" stroke="#3a3a3a" stroke-width="2.4" stroke-linecap="round" transform="rotate(-45 10 10)"><path d="M9.5 6H4A4 4 0 0 0 4 14H6.5"/><path d="M13.5 6H16A4 4 0 0 1 16 14H10.5"/><path d="M7 10H13"/></g></svg>
<div style="position:absolute;left:177.2px;top:559.70px;font-family:'Liberation Sans',sans-serif;font-size:13px;line-height:13px;font-weight:400;color:#3d3d3d;white-space:pre;transform:scaleX(1.0196);transform-origin:0 0;">Book 1 v1:1</div>
<div style="position:absolute;left:73.3px;top:583.3px;width:185.0px;height:25px;background:#f0f0f0"></div>
<svg style="position:absolute;left:50.5px;top:587.5px;" width="12.5" height="17" viewBox="0 0 12.5 17"><path d="M1 1l10 7.5L1 16z" fill="#fff" stroke="#555" stroke-width="1.6" stroke-linejoin="round"/></svg>
<svg style="position:absolute;left:77px;top:590px;" width="20" height="12" viewBox="0 0 20 12"><path d="M0.5 6C3 2 6.3 0 10 0s7 2 9.5 6c-2.5 4-5.8 6-9.5 6S3 10 0.5 6z" fill="#9b9b9b"/><circle cx="10" cy="6" r="3.6" fill="none" stroke="#eee" stroke-width="1.3"/><circle cx="10" cy="6" r="2.2" fill="#9b9b9b"/></svg>
<svg style="position:absolute;left:108px;top:586px;" width="20" height="20" viewBox="0 0 20 20"><path d="M1.5 4.5L5 1h13.5v14.5L15 19H1.5z" fill="#e8e8ea" stroke="#555" stroke-width="1.3" stroke-linejoin="round"/><path d="M1.5 4.5H15V19M15 4.5L18.5 1" fill="none" stroke="#777" stroke-width="0.9"/><path d="M15.5 5l2.5-2.8v12.8l-2.5 3z" fill="#cfcfd3"/></svg>
<svg style="position:absolute;left:139.5px;top:586px;" width="20" height="20" viewBox="0 0 20 20"><g fill="none" stroke="#3a3a3a" stroke-width="2.4" stroke-linecap="round" transform="rotate(-45 10 10)"><path d="M9.5 6H4A4 4 0 0 0 4 14H6.5"/><path d="M13.5 6H16A4 4 0 0 1 16 14H10.5"/><path d="M7 10H13"/></g></svg>
<div style="position:absolute;left:177.2px;top:589.70px;font-family:'Liberation Sans',sans-serif;font-size:13px;line-height:13px;font-weight:400;color:#3d3d3d;white-space:pre;transform:scaleX(1.0196);transform-origin:0 0;">Book 2 v1:1</div>
<div style="position:absolute;left:73.3px;top:613.3px;width:185.0px;height:25px;background:#f0f0f0"></div>
<svg style="position:absolute;left:50.5px;top:617.5px;" width="12.5" height="17" viewBox="0 0 12.5 17"><path d="M1 1l10 7.5L1 16z" fill="#fff" stroke="#555" stroke-width="1.6" stroke-linejoin="round"/></svg>
<svg style="position:absolute;left:77px;top:620px;" width="20" height="12" viewBox="0 0 20 12"><path d="M0.5 6C3 2 6.3 0 10 0s7 2 9.5 6c-2.5 4-5.8 6-9.5 6S3 10 0.5 6z" fill="#9b9b9b"/><circle cx="10" cy="6" r="3.6" fill="none" stroke="#eee" stroke-width="1.3"/><circle cx="10" cy="6" r="2.2" fill="#9b9b9b"/></svg>
<svg style="position:absolute;left:108px;top:616px;" width="20" height="20" viewBox="0 0 20 20"><path d="M1.5 4.5L5 1h13.5v14.5L15 19H1.5z" fill="#e8e8ea" stroke="#555" stroke-width="1.3" stroke-linejoin="round"/><path d="M1.5 4.5H15V19M15 4.5L18.5 1" fill="none" stroke="#777" stroke-width="0.9"/><path d="M15.5 5l2.5-2.8v12.8l-2.5 3z" fill="#cfcfd3"/></svg>
<svg style="position:absolute;left:139.5px;top:616px;" width="20" height="20" viewBox="0 0 20 20"><g fill="none" stroke="#3a3a3a" stroke-width="2.4" stroke-linecap="round" transform="rotate(-45 10 10)"><path d="M9.5 6H4A4 4 0 0 0 4 14H6.5"/><path d="M13.5 6H16A4 4 0 0 1 16 14H10.5"/><path d="M7 10H13"/></g></svg>
<div style="position:absolute;left:177.2px;top:619.70px;font-family:'Liberation Sans',sans-serif;font-size:13px;line-height:13px;font-weight:400;color:#3d3d3d;white-space:pre;transform:scaleX(1.0196);transform-origin:0 0;">Book 3 v1:1</div>
<div style="position:absolute;left:73.3px;top:643.3px;width:185.0px;height:25px;background:#f0f0f0"></div>
<svg style="position:absolute;left:50.5px;top:647.5px;" width="12.5" height="17" viewBox="0 0 12.5 17"><path d="M1 1l10 7.5L1 16z" fill="#fff" stroke="#555" stroke-width="1.6" stroke-linejoin="round"/></svg>
<svg style="position:absolute;left:77px;top:650px;" width="20" height="12" viewBox="0 0 20 12"><path d="M0.5 6C3 2 6.3 0 10 0s7 2 9.5 6c-2.5 4-5.8 6-9.5 6S3 10 0.5 6z" fill="#9b9b9b"/><circle cx="10" cy="6" r="3.6" fill="none" stroke="#eee" stroke-width="1.3"/><circle cx="10" cy="6" r="2.2" fill="#9b9b9b"/></svg>
<svg style="position:absolute;left:108px;top:646px;" width="20" height="20" viewBox="0 0 20 20"><path d="M1.5 4.5L5 1h13.5v14.5L15 19H1.5z" fill="#e8e8ea" stroke="#555" stroke-width="1.3" stroke-linejoin="round"/><path d="M1.5 4.5H15V19M15 4.5L18.5 1" fill="none" stroke="#777" stroke-width="0.9"/><path d="M15.5 5l2.5-2.8v12.8l-2.5 3z" fill="#cfcfd3"/></svg>
<svg style="position:absolute;left:139.5px;top:646px;" width="20" height="20" viewBox="0 0 20 20"><g fill="none" stroke="#3a3a3a" stroke-width="2.4" stroke-linecap="round" transform="rotate(-45 10 10)"><path d="M9.5 6H4A4 4 0 0 0 4 14H6.5"/><path d="M13.5 6H16A4 4 0 0 1 16 14H10.5"/><path d="M7 10H13"/></g></svg>
<div style="position:absolute;left:177.2px;top:649.70px;font-family:'Liberation Sans',sans-serif;font-size:13px;line-height:13px;font-weight:400;color:#3d3d3d;white-space:pre;transform:scaleX(1.0196);transform-origin:0 0;">Book 4 v1:1</div>
<div style="position:absolute;left:73.3px;top:673.3px;width:185.0px;height:25px;background:#f0f0f0"></div>
<svg style="position:absolute;left:50.5px;top:677.5px;" width="12.5" height="17" viewBox="0 0 12.5 17"><path d="M1 1l10 7.5L1 16z" fill="#fff" stroke="#555" stroke-width="1.6" stroke-linejoin="round"/></svg>
<svg style="position:absolute;left:77px;top:680px;" width="20" height="12" viewBox="0 0 20 12"><path d="M0.5 6C3 2 6.3 0 10 0s7 2 9.5 6c-2.5 4-5.8 6-9.5 6S3 10 0.5 6z" fill="#9b9b9b"/><circle cx="10" cy="6" r="3.6" fill="none" stroke="#eee" stroke-width="1.3"/><circle cx="10" cy="6" r="2.2" fill="#9b9b9b"/></svg>
<svg style="position:absolute;left:108px;top:676px;" width="20" height="20" viewBox="0 0 20 20"><path d="M1.5 4.5L5 1h13.5v14.5L15 19H1.5z" fill="#e8e8ea" stroke="#555" stroke-width="1.3" stroke-linejoin="round"/><path d="M1.5 4.5H15V19M15 4.5L18.5 1" fill="none" stroke="#777" stroke-width="0.9"/><path d="M15.5 5l2.5-2.8v12.8l-2.5 3z" fill="#cfcfd3"/></svg>
<svg style="position:absolute;left:139.5px;top:676px;" width="20" height="20" viewBox="0 0 20 20"><g fill="none" stroke="#3a3a3a" stroke-width="2.4" stroke-linecap="round" transform="rotate(-45 10 10)"><path d="M9.5 6H4A4 4 0 0 0 4 14H6.5"/><path d="M13.5 6H16A4 4 0 0 1 16 14H10.5"/><path d="M7 10H13"/></g></svg>
<div style="position:absolute;left:177.2px;top:679.70px;font-family:'Liberation Sans',sans-serif;font-size:13px;line-height:13px;font-weight:400;color:#3d3d3d;white-space:pre;transform:scaleX(1.0196);transform-origin:0 0;">Book 5 v1:1</div>
<div style="position:absolute;left:6px;top:953px;width:375px;height:31px;background:#f1f1f1;border:1px solid #c9c9c9"></div>
<div style="position:absolute;left:37.5px;top:961.57px;font-family:'Liberation Sans',sans-serif;font-size:13.5px;line-height:13.5px;font-weight:400;color:#6b6b6b;white-space:pre;transform:scaleX(0.8952);transform-origin:0 0;">COMMENTS</div>
<svg style="position:absolute;left:354.5px;top:962.5px;" width="12" height="12" viewBox="0 0 12 12"><circle cx="6" cy="6" r="5.8" fill="#333"/><rect x="2.5" y="5.2" width="7" height="1.7" fill="#f1f1f1"/><rect x="5.15" y="2.5" width="1.7" height="7" fill="#f1f1f1"/></svg>
<div style="position:absolute;left:375px;top:962px;width:1px;height:13.5px;background:#555"></div>
<div style="position:absolute;left:377.3px;top:964px;width:1.2px;height:9.5px;background:#aaa"></div>
<svg style="position:absolute;left:0px;top:0px;" width="1920" height="1080" viewBox="0 0 1920 1080"><rect x="923.8" y="479" width="283" height="23.8" rx="1.2" fill="#7f7f77" stroke="#363636" stroke-width="1.7"/><rect x="941.5" y="502.8" width="247.7" height="22" fill="#7e7e76" stroke="#161616" stroke-width="1.3"/><path d="M935.8 524.7H1195.5V891H1161V862.4H976.3V891H935.8z M969 558.2V828.4H1161.5V558.2z" fill-rule="evenodd" fill="#7d7d75" stroke="#161616" stroke-width="1.3"/><rect x="936.5" y="525.4" width="22" height="365" fill="#78786f"/><rect x="942.2" y="503.5" width="17" height="21" fill="#78786f"/><rect x="924.5" y="479.7" width="34" height="22.5" fill="#7b7b73"/><path d="M935.8 524.7H1195.5V891H1161V862.4H976.3V891H935.8z M969 558.2V828.4H1161.5V558.2z" fill="none" stroke="#363636" stroke-width="1.8"/><rect x="924" y="479.2" width="282.6" height="23.4" rx="1.2" fill="none" stroke="#363636" stroke-width="1.7"/><path d="M969 558.2H981.3L1161.5 816.8V828.4H1148.9L969 570.5z" fill="#7d7d75" stroke="#161616" stroke-width="1.2"/><path d="M1148.9 558.2H1161.5V571.3L981 828.4H969V816z" fill="#7d7d75" stroke="#161616" stroke-width="1.2"/><rect x="969" y="558.2" width="192.5" height="270.2" fill="none" stroke="#363636" stroke-width="1.8"/><path d="M1000 478.8L1014.5 469.7H1122.2L1131 478.8z" fill="#56544e" stroke="#161616" stroke-width="1.3"/><defs><linearGradient id="vg" x1="0" y1="0" x2="1" y2="0"><stop offset="0" stop-color="#b9b8b2"/><stop offset="0.45" stop-color="#e4e3de"/><stop offset="1" stop-color="#cfcec9"/></linearGradient></defs><path d="M1010 412.5C1016 420 1017 428 1015 440C1012 452 1006 460 1006 468C1006 470 1007 472 1008 473H1030C1035 470 1037 462 1036 455C1034 445 1030 432 1031 425C1032 419 1034 415 1036.5 412.5z" fill="url(#vg)"/><rect x="1008" y="410.3" width="28.8" height="2.6" fill="#222"/><rect x="1029" y="437.5" width="73" height="30" fill="#cfcdc7" stroke="#161616" stroke-width="1.4"/><rect x="1029" y="437" width="73" height="4.2" fill="#000"/><rect x="1025.5" y="454.3" width="11.5" height="14" fill="#bdbcb6" stroke="#161616" stroke-width="1.4"/><rect x="1094" y="454.3" width="12.5" height="13.6" fill="#b6b5af" stroke="#161616" stroke-width="1.4"/><rect x="1106.5" y="460.5" width="4" height="8" fill="#aaa" stroke="#161616" stroke-width="1.2"/><rect x="1037" y="445" width="57" height="24" fill="#cecdc6" stroke="#161616" stroke-width="1.4"/><rect x="1037" y="444.8" width="57" height="3.2" fill="#000"/><rect x="1022.5" y="468" width="90" height="2.5" fill="#111"/><path d="M1022.6 470V330" stroke="#111" stroke-width="1.6" fill="none"/><path d="M1025.6 410V330" stroke="#333" stroke-width="1.4" fill="none"/><path d="M1023.5 409V330" stroke="#8a8a85" stroke-width="1.6" fill="none"/><path d="M1027 325C1030 312 1045 303 1059 303" stroke="#111" stroke-width="1.3" fill="none"/><path d="M1029 330C1034 316 1048 307 1061 306" stroke="#111" stroke-width="1.1" fill="none"/><path d="M1058.5 304V258M1061 304V258" stroke="#111" stroke-width="1.1" fill="none"/><path d="M1059.5 304V259" stroke="#999" stroke-width="1" fill="none"/><path d="M1059.0 268.0Q1040.0 243.0 1007.5 241.5Q1043.2 236.8 1059.0 268.0zM1061.0 268.0Q1080.0 243.0 1113.5 240.5Q1076.8 236.8 1061.0 268.0zM1058.0 307.0Q1030.0 279.0 992.5 276.5Q1033.0 272.7 1058.0 307.0zM1062.0 302.0Q1072.0 280.0 1092.5 275.5Q1067.7 275.1 1062.0 302.0zM1070.0 303.0Q1085.0 299.0 1099.5 302.0Q1084.8 294.5 1070.0 303.0zM1100.0 315.0Q1115.0 310.0 1129.5 311.0Q1114.4 305.5 1100.0 315.0zM1024.0 368.0Q1000.0 338.0 952.0 337.5Q1002.5 332.0 1024.0 368.0zM1026.0 402.0Q1045.0 377.0 1095.0 372.5Q1042.4 371.0 1026.0 402.0z" fill="#111"/><path d="M1002 478L1056 444.5V355L1009 327.6L1013 320.8H1054" fill="none" stroke="#111" stroke-width="4.2" stroke-linejoin="round"/><path d="M1002 478L1056 444.5V355L1009 327.6L1013 320.8H1054" fill="none" stroke="#7a7a76" stroke-width="1.6" stroke-linejoin="round"/><path d="M1058.5 345V388.5H1062.5V345M1065.5 345V388.5" fill="none" stroke="#222" stroke-width="1.1"/><path d="M1059.6 303.9L1116 316.2L1087.8 370.7L1045.6 337.3z" fill="#000"/></svg>
<svg style="position:absolute;left:0px;top:0px;" width="1920" height="1080" viewBox="0 0 1920 1080"><defs><radialGradient id="vsh" cx="0.5" cy="0.5" r="0.5"><stop offset="0" stop-color="#000" stop-opacity="0.18"/><stop offset="1" stop-color="#000" stop-opacity="0"/></radialGradient><linearGradient id="vcf" x1="0" y1="0" x2="0" y2="1"><stop offset="0" stop-color="#efefef"/><stop offset="1" stop-color="#e2e2e2"/></linearGradient></defs><ellipse cx="1850" cy="288" rx="42" ry="4" fill="url(#vsh)"/><rect x="1815.3" y="224.5" width="59" height="59" fill="url(#vcf)" stroke="#b4b4b4" stroke-width="1"/><rect x="1826" y="235.5" width="37" height="37" fill="#dcdde0"/><path d="M1806 285.2H1875.5" stroke="#6fe06f" stroke-width="2.2"/><path d="M1875.5 216V285" stroke="#7777ff" stroke-width="1.8"/></svg>
<div style="position:absolute;left:1831px;top:246.53px;font-family:'Liberation Sans',sans-serif;font-size:16.5px;line-height:16.5px;font-weight:700;color:#8a8d92;white-space:pre;transform:scaleX(0.6788);transform-origin:0 0;">LEFT</div>
<div style="position:absolute;left:1870.3px;top:197.63px;font-family:'Liberation Sans',sans-serif;font-size:16.5px;line-height:16.5px;font-weight:700;color:#7b7bff;white-space:pre;transform:scaleX(0.9214);transform-origin:0 0;">Z</div>
<div style="position:absolute;left:1792px;top:276.76px;font-family:'Liberation Sans',sans-serif;font-size:16px;line-height:16px;font-weight:400;color:#7ee87e;white-space:pre;transform:scaleX(0.7965);transform-origin:0 0;">Y</div>
<div style="position:absolute;left:811px;top:954px;width:296px;height:30px;background:#f0f0f0"></div>
<svg style="position:absolute;left:813px;top:958px;" width="24" height="23" viewBox="0 0 24 23"><g fill="none" stroke="#3f444c" stroke-width="1.3"><path d="M12.5 4.5C11.5 2 10.5 1 9.5 1 7.5 1 6 5.5 6 11.5S7.5 22 9.5 22c1 0 2-1 3-3.5"/><path d="M4.7 7.8C3 8.5 1.7 9.5 1.7 10.5c0 1 1.3 2.2 3 2.7"/><path d="M8.5 14.5c6 0 13.5-1 13.5-3.5 0-1.5-2-2.8-4.3-3.3"/></g><path d="M10.8 5.5l2.8-1.3 1.2 2.8z M15.6 6.3l2.6 0.3-0.4 3.3z" fill="#3f444c"/><path d="M11 8.3l2 2.2-2 2.2-2-2.2z" fill="#1f7fe0"/></svg>
<svg style="position:absolute;left:841px;top:966px;" width="8" height="5" viewBox="0 0 8 5"><path d="M0 0h8L4 5z" fill="#333"/></svg>
<svg style="position:absolute;left:855.5px;top:958.5px;" width="21" height="21" viewBox="0 0 21 21"><path d="M2 7L7 1.5l1.5 4 5-2.5 1.5 3 4-1.5 0.5 3.5H2z" fill="#c9ced6" stroke="#3f444c" stroke-width="1.1" stroke-linejoin="round"/><rect x="1.2" y="7.2" width="18.6" height="12.6" rx="1.2" fill="#f6f7f9" stroke="#3f444c" stroke-width="1.4"/><rect x="5" y="11" width="11" height="5.2" fill="#b4bac4" stroke="#3f444c" stroke-width="1.1"/></svg>
<svg style="position:absolute;left:888px;top:959px;" width="21" height="20" viewBox="0 0 21 20"><path d="M6.5 19.5C4.5 17 1.3 13.5 0.9 12c-0.4-1.6 1.6-2.3 3-0.9L5.7 13V4c0-1.6 2.5-1.6 2.5 0v5.5V2.2c0-1.6 2.7-1.6 2.7 0V9.5V3c0-1.6 2.7-1.6 2.7 0v7.3l1.9-4.6c0.6-1.5 3-0.9 2.5 0.8L15.8 14c-1 3.5-2 5.5-3.5 5.5z" fill="#f3f4f6" stroke="#3f444c" stroke-width="1.2" stroke-linejoin="round"/></svg>
<svg style="position:absolute;left:921px;top:959px;" width="20" height="20" viewBox="0 0 20 20"><circle cx="5.8" cy="8.5" r="5.3" fill="#e2eef0" stroke="#3f444c" stroke-width="1.7"/><path d="M9.8 12.5l4.3 4.5" stroke="#2f343b" stroke-width="3.2" stroke-linecap="round"/><path d="M14 2.8h6.2M17.1 0v5.8M14 7.6h6.2" stroke="#3f444c" stroke-width="1.3"/></svg>
<svg style="position:absolute;left:953px;top:959px;" width="21" height="20" viewBox="0 0 21 20"><rect x="0.6" y="0.6" width="19.6" height="19" fill="none" stroke="#3f444c" stroke-width="1.1" stroke-dasharray="2.2 2.6"/><circle cx="8.3" cy="7.9" r="6.6" fill="#e2eef0" stroke="#3f444c" stroke-width="1.7"/><path d="M13 12.8l5.5 5.7" stroke="#2f343b" stroke-width="3.2" stroke-linecap="round"/></svg>
<svg style="position:absolute;left:980px;top:966px;" width="8" height="5" viewBox="0 0 8 5"><path d="M0 0h8L4 5z" fill="#333"/></svg>
<svg style="position:absolute;left:995px;top:959px;" width="20" height="20" viewBox="0 0 20 20"><defs><linearGradient id="scr" x1="0" y1="0" x2="0" y2="1"><stop offset="0" stop-color="#b4cbe8"/><stop offset="1" stop-color="#8eaed8"/></linearGradient></defs><rect x="0.7" y="0.7" width="18.2" height="15.3" rx="1.5" fill="#f4f6f8" stroke="#4a4d52" stroke-width="1.3"/><rect x="2.6" y="2.6" width="14.3" height="11.2" rx="1.5" fill="url(#scr)" stroke="#3a5a8c" stroke-width="1.3"/><path d="M5.2 19.2l1-3.2h7.2l1 3.2z" fill="#f4f6f8" stroke="#4a4d52" stroke-width="1.1" stroke-linejoin="round"/></svg>
<svg style="position:absolute;left:1017.2px;top:966.2px;" width="7.2" height="4.5" viewBox="0 0 7.2 4.5"><path d="M0 0h7.2L3.6 4.5z" fill="#2c2c2c"/></svg>
<svg style="position:absolute;left:1033px;top:959px;" width="20" height="20" viewBox="0 0 20 20"><defs><linearGradient id="grd" x1="0" y1="0" x2="0" y2="1"><stop offset="0" stop-color="#9a9ca0"/><stop offset="1" stop-color="#6e7278"/></linearGradient></defs><rect x="0.6" y="0.6" width="18.6" height="18.6" rx="1.6" fill="url(#grd)" stroke="#55585c" stroke-width="1.2"/><rect x="2.0" y="2.0" width="2.3" height="2.3" fill="#f6f7f9"/><rect x="5.5" y="2.0" width="2.3" height="2.3" fill="#f6f7f9"/><rect x="9.0" y="2.0" width="2.3" height="2.3" fill="#f6f7f9"/><rect x="12.5" y="2.0" width="2.3" height="2.3" fill="#f6f7f9"/><rect x="16.0" y="2.0" width="2.3" height="2.3" fill="#f6f7f9"/><rect x="2.0" y="5.5" width="2.3" height="2.3" fill="#f6f7f9"/><rect x="5.5" y="5.5" width="2.3" height="2.3" fill="#f6f7f9"/><rect x="9.0" y="5.5" width="2.3" height="2.3" fill="#f6f7f9"/><rect x="12.5" y="5.5" width="2.3" height="2.3" fill="#f6f7f9"/><rect x="16.0" y="5.5" width="2.3" height="2.3" fill="#f6f7f9"/><rect x="2.0" y="9.0" width="2.3" height="2.3" fill="#f6f7f9"/><rect x="5.5" y="9.0" width="2.3" height="2.3" fill="#f6f7f9"/><rect x="9.0" y="9.0" width="2.3" height="2.3" fill="#f6f7f9"/><rect x="12.5" y="9.0" width="2.3" height="2.3" fill="#f6f7f9"/><rect x="16.0" y="9.0" width="2.3" height="2.3" fill="#f6f7f9"/><rect x="2.0" y="12.5" width="2.3" height="2.3" fill="#f6f7f9"/><rect x="5.5" y="12.5" width="2.3" height="2.3" fill="#f6f7f9"/><rect x="9.0" y="12.5" width="2.3" height="2.3" fill="#f6f7f9"/><rect x="12.5" y="12.5" width="2.3" height="2.3" fill="#f6f7f9"/><rect x="16.0" y="12.5" width="2.3" height="2.3" fill="#f6f7f9"/><rect x="2.0" y="16.0" width="2.3" height="2.3" fill="#f6f7f9"/><rect x="5.5" y="16.0" width="2.3" height="2.3" fill="#f6f7f9"/><rect x="9.0" y="16.0" width="2.3" height="2.3" fill="#f6f7f9"/><rect x="12.5" y="16.0" width="2.3" height="2.3" fill="#f6f7f9"/><rect x="16.0" y="16.0" width="2.3" height="2.3" fill="#f6f7f9"/></svg>
<svg style="position:absolute;left:1055.9px;top:966.2px;" width="7.2" height="4.5" viewBox="0 0 7.2 4.5"><path d="M0 0h7.2L3.6 4.5z" fill="#2c2c2c"/></svg>
<svg style="position:absolute;left:1072px;top:960px;" width="20" height="17.5" viewBox="0 0 20 17.5"><rect x="0.8" y="0.8" width="8.6" height="7.6" rx="1.5" fill="#a9c4e8" stroke="#3d5c92" stroke-width="1.4"/><rect x="3.4000000000000004" y="3.0999999999999996" width="3.4" height="3" fill="none" stroke="#87a6d2" stroke-width="0.8"/><rect x="10.3" y="0.8" width="8.6" height="7.6" rx="1.5" fill="#a9c4e8" stroke="#3d5c92" stroke-width="1.4"/><rect x="12.9" y="3.0999999999999996" width="3.4" height="3" fill="none" stroke="#87a6d2" stroke-width="0.8"/><rect x="0.8" y="9.2" width="8.6" height="7.6" rx="1.5" fill="#a9c4e8" stroke="#3d5c92" stroke-width="1.4"/><rect x="3.4000000000000004" y="11.5" width="3.4" height="3" fill="none" stroke="#87a6d2" stroke-width="0.8"/><rect x="10.3" y="9.2" width="8.6" height="7.6" rx="1.5" fill="#a9c4e8" stroke="#3d5c92" stroke-width="1.4"/><rect x="12.9" y="11.5" width="3.4" height="3" fill="none" stroke="#87a6d2" stroke-width="0.8"/></svg>
<svg style="position:absolute;left:1094.7px;top:966.2px;" width="7.2" height="4.5" viewBox="0 0 7.2 4.5"><path d="M0 0h7.2L3.6 4.5z" fill="#2c2c2c"/></svg>
<svg style="position:absolute;left:14.5px;top:1013px;" width="16" height="18" viewBox="0 0 16 18"><rect x="0.3" y="0" width="2.3" height="18" fill="#4a4a4a"/><path d="M15.2 0v18L2.5 9z" fill="#4a4a4a"/></svg>
<svg style="position:absolute;left:45px;top:1013px;" width="17" height="18" viewBox="0 0 17 18"><path d="M12 0v18L0.3 9z" fill="#4a4a4a"/><rect x="13.6" y="5.5" width="2.5" height="7.5" fill="#4a4a4a"/></svg>
<svg style="position:absolute;left:77px;top:1013px;" width="15" height="18.5" viewBox="0 0 15 18.5"><path d="M0 0v18.5L15 9.25z" fill="#4a4a4a"/></svg>
<svg style="position:absolute;left:107px;top:1013px;" width="17" height="18" viewBox="0 0 17 18"><rect x="0" y="5.5" width="2.5" height="7.5" fill="#4a4a4a"/><path d="M4 0v18L16.5 9z" fill="#4a4a4a"/></svg>
<svg style="position:absolute;left:139.5px;top:1013px;" width="16" height="18" viewBox="0 0 16 18"><path d="M0 0v18L12.8 9z" fill="#4a4a4a"/><rect x="12.8" y="0" width="2.4" height="18" fill="#4a4a4a"/></svg>
<svg style="position:absolute;left:184px;top:1010.5px;" width="22" height="21" viewBox="0 0 22 21"><path d="M1.5 1.5h15M1.5 1.5v15.5h8M16.5 1.5v7" stroke="#333" stroke-width="1.2" fill="none"/><rect x="0" y="0" width="3" height="3" fill="#1e7fe0"/><rect x="15" y="0" width="3" height="3" fill="#1e7fe0"/><rect x="0" y="15.5" width="3" height="3" fill="#1e7fe0"/><path d="M10 18l8-8 2 2-8 8z" fill="#f6b93b"/><path d="M18 10l1.5-1.5 2 2L20 12z" fill="#e53935"/><path d="M10 18l-1 2.5 3-0.5z" fill="#555"/></svg>
<div style="position:absolute;left:193px;top:1034.7px;width:2px;height:7.3px;background:#cdcdcd"></div>
<svg style="position:absolute;left:214px;top:1010.5px;" width="22" height="21" viewBox="0 0 22 21"><path d="M0.5 16.5h11l4-4v4l-4 4h-11z" fill="#c8c8c8"/><path d="M0.5 5h11v11.5h-11z" fill="#69aee5"/><path d="M11.5 5l4-4.5v12l-4 4z" fill="#4393cf"/><path d="M0.5 5l4.5-4.5h10.5l-4 4.5z" fill="#8fcbf7"/><path d="M18.3 4v13" stroke="#222" stroke-width="1.3"/><path d="M16.5 5l1.8-4.5 1.8 4.5z" fill="#222"/></svg>
<div style="position:absolute;left:223px;top:1034.7px;width:2px;height:7.3px;background:#cdcdcd"></div>
<svg style="position:absolute;left:244px;top:1010.5px;" width="22" height="21" viewBox="0 0 22 21"><path d="M1 19.5V6l5-5h14v13.5l-5 5z" fill="#d6d6d6" stroke="#6a6a6a" stroke-width="1.4" stroke-linejoin="round"/><path d="M1.7 6l4.6-4.3h13L15 6z" fill="#ececec"/><path d="M15 6.5l4.3-4.3v12l-4.3 4.3z" fill="#bcbcbc"/></svg>
<div style="position:absolute;left:253px;top:1034.7px;width:2px;height:7.3px;background:#cdcdcd"></div>
<svg style="position:absolute;left:274px;top:1010.5px;" width="22" height="21" viewBox="0 0 22 21"><path d="M1.5 1.5h15M1.5 1.5v15.5h8M16.5 1.5v7" stroke="#333" stroke-width="1.2" fill="none"/><rect x="0" y="0" width="3" height="3" fill="#1e7fe0"/><rect x="15" y="0" width="3" height="3" fill="#1e7fe0"/><rect x="0" y="15.5" width="3" height="3" fill="#1e7fe0"/><path d="M10 18l8-8 2 2-8 8z" fill="#f6b93b"/><path d="M18 10l1.5-1.5 2 2L20 12z" fill="#e53935"/><path d="M10 18l-1 2.5 3-0.5z" fill="#555"/></svg>
<div style="position:absolute;left:283px;top:1034.7px;width:2px;height:7.3px;background:#cdcdcd"></div>
<svg style="position:absolute;left:304px;top:1010.5px;" width="22" height="21" viewBox="0 0 22 21"><path d="M0.5 16.5h11l4-4v4l-4 4h-11z" fill="#c8c8c8"/><path d="M0.5 5h11v11.5h-11z" fill="#69aee5"/><path d="M11.5 5l4-4.5v12l-4 4z" fill="#4393cf"/><path d="M0.5 5l4.5-4.5h10.5l-4 4.5z" fill="#8fcbf7"/><path d="M18.3 4v13" stroke="#222" stroke-width="1.3"/><path d="M16.5 5l1.8-4.5 1.8 4.5z" fill="#222"/></svg>
<div style="position:absolute;left:313px;top:1034.7px;width:2px;height:7.3px;background:#cdcdcd"></div>
<svg style="position:absolute;left:334px;top:1010.5px;" width="22" height="21" viewBox="0 0 22 21"><path d="M1.5 1.5h15M1.5 1.5v15.5h8M16.5 1.5v7" stroke="#333" stroke-width="1.2" fill="none"/><rect x="0" y="0" width="3" height="3" fill="#1e7fe0"/><rect x="15" y="0" width="3" height="3" fill="#1e7fe0"/><rect x="0" y="15.5" width="3" height="3" fill="#1e7fe0"/><path d="M10 18l8-8 2 2-8 8z" fill="#f6b93b"/><path d="M18 10l1.5-1.5 2 2L20 12z" fill="#e53935"/><path d="M10 18l-1 2.5 3-0.5z" fill="#555"/></svg>
<div style="position:absolute;left:343px;top:1034.7px;width:2px;height:7.3px;background:#cdcdcd"></div>
<svg style="position:absolute;left:364px;top:1010.5px;" width="22" height="21" viewBox="0 0 22 21"><path d="M0.5 16.5h11l4-4v4l-4 4h-11z" fill="#c8c8c8"/><path d="M0.5 5h11v11.5h-11z" fill="#69aee5"/><path d="M11.5 5l4-4.5v12l-4 4z" fill="#4393cf"/><path d="M0.5 5l4.5-4.5h10.5l-4 4.5z" fill="#8fcbf7"/><path d="M18.3 4v13" stroke="#222" stroke-width="1.3"/><path d="M16.5 5l1.8-4.5 1.8 4.5z" fill="#222"/></svg>
<div style="position:absolute;left:373px;top:1034.7px;width:2px;height:7.3px;background:#cdcdcd"></div>
<svg style="position:absolute;left:394px;top:1010.5px;" width="22" height="21" viewBox="0 0 22 21"><path d="M1 19L9 1.5V19z" fill="none" stroke="#555" stroke-width="1.2"/><path d="M10.5 1.5V19H19z" fill="#69aee5"/></svg>
<div style="position:absolute;left:403px;top:1034.7px;width:2px;height:7.3px;background:#cdcdcd"></div>
<svg style="position:absolute;left:424px;top:1010.5px;" width="22" height="21" viewBox="0 0 22 21"><path d="M1 19V6l5-5h1.5v18z" fill="#e2e2e2" stroke="#666" stroke-width="1.1"/><path d="M7 19V6l5-5v13z" fill="#5cc075"/><path d="M14 19V7l6-6v12z" fill="#e69a64"/></svg>
<div style="position:absolute;left:433px;top:1034.7px;width:2px;height:7.3px;background:#cdcdcd"></div>
<svg style="position:absolute;left:454px;top:1010.5px;" width="22" height="21" viewBox="0 0 22 21"><path d="M1.5 1.5h15M1.5 1.5v15.5h8M16.5 1.5v7" stroke="#333" stroke-width="1.2" fill="none"/><rect x="0" y="0" width="3" height="3" fill="#1e7fe0"/><rect x="15" y="0" width="3" height="3" fill="#1e7fe0"/><rect x="0" y="15.5" width="3" height="3" fill="#1e7fe0"/><path d="M10 18l8-8 2 2-8 8z" fill="#f6b93b"/><path d="M18 10l1.5-1.5 2 2L20 12z" fill="#e53935"/><path d="M10 18l-1 2.5 3-0.5z" fill="#555"/></svg>
<div style="position:absolute;left:463px;top:1034.7px;width:2px;height:7.3px;background:#cdcdcd"></div>
<svg style="position:absolute;left:484px;top:1010.5px;" width="22" height="21" viewBox="0 0 22 21"><path d="M0.5 16.5h11l4-4v4l-4 4h-11z" fill="#c8c8c8"/><path d="M0.5 5h11v11.5h-11z" fill="#69aee5"/><path d="M11.5 5l4-4.5v12l-4 4z" fill="#4393cf"/><path d="M0.5 5l4.5-4.5h10.5l-4 4.5z" fill="#8fcbf7"/><path d="M18.3 4v13" stroke="#222" stroke-width="1.3"/><path d="M16.5 5l1.8-4.5 1.8 4.5z" fill="#222"/></svg>
<div style="position:absolute;left:493px;top:1034.7px;width:2px;height:7.3px;background:#cdcdcd"></div>
<svg style="position:absolute;left:514px;top:1010.5px;" width="22" height="21" viewBox="0 0 22 21"><path d="M0.5 16.5h11l4-4v4l-4 4h-11z" fill="#c8c8c8"/><path d="M0.5 5h11v11.5h-11z" fill="#69aee5"/><path d="M11.5 5l4-4.5v12l-4 4z" fill="#4393cf"/><path d="M0.5 5l4.5-4.5h10.5l-4 4.5z" fill="#8fcbf7"/><path d="M18.3 4v13" stroke="#222" stroke-width="1.3"/><path d="M16.5 5l1.8-4.5 1.8 4.5z" fill="#222"/></svg>
<div style="position:absolute;left:523px;top:1034.7px;width:2px;height:7.3px;background:#cdcdcd"></div>
<svg style="position:absolute;left:544px;top:1010.5px;" width="22" height="21" viewBox="0 0 22 21"><path d="M0.5 16.5h11l4-4v4l-4 4h-11z" fill="#c8c8c8"/><path d="M0.5 5h11v11.5h-11z" fill="#69aee5"/><path d="M11.5 5l4-4.5v12l-4 4z" fill="#4393cf"/><path d="M0.5 5l4.5-4.5h10.5l-4 4.5z" fill="#8fcbf7"/><path d="M18.3 4v13" stroke="#222" stroke-width="1.3"/><path d="M16.5 5l1.8-4.5 1.8 4.5z" fill="#222"/></svg>
<div style="position:absolute;left:553px;top:1034.7px;width:2px;height:7.3px;background:#cdcdcd"></div>
<svg style="position:absolute;left:574px;top:1010.5px;" width="22" height="21" viewBox="0 0 22 21"><path d="M1 19L9 1.5V19z" fill="none" stroke="#555" stroke-width="1.2"/><path d="M10.5 1.5V19H19z" fill="#69aee5"/></svg>
<div style="position:absolute;left:583px;top:1034.7px;width:2px;height:7.3px;background:#cdcdcd"></div>
<svg style="position:absolute;left:604px;top:1010.5px;" width="22" height="21" viewBox="0 0 22 21"><path d="M1 19.5V6l5-5h14v13.5l-5 5z" fill="#d6d6d6" stroke="#6a6a6a" stroke-width="1.4" stroke-linejoin="round"/><path d="M1.7 6l4.6-4.3h13L15 6z" fill="#e8e8e8"/><path d="M15 6.5l4.3-4.3v12l-4.3 4.3z" fill="#c2c2c2"/><g fill="none" stroke="#8a8a8a" stroke-width="1.5"><path d="M8 14.5l-1.5 1.5a2.3 2.3 0 0 1-3.3-3.3l2.7-2.7a2.3 2.3 0 0 1 3.3 0"/><path d="M10 9l1.5-1.5a2.3 2.3 0 0 1 3.3 3.3l-2.7 2.7a2.3 2.3 0 0 1-3.3 0"/></g></svg>
<div style="position:absolute;left:613px;top:1034.7px;width:2px;height:7.3px;background:#cdcdcd"></div>
<svg style="position:absolute;left:634px;top:1010.5px;" width="22" height="21" viewBox="0 0 22 21"><path d="M1 19.5V6l5-5h14v13.5l-5 5z" fill="#d6d6d6" stroke="#6a6a6a" stroke-width="1.4" stroke-linejoin="round"/><path d="M1.7 6l4.6-4.3h13L15 6z" fill="#e8e8e8"/><path d="M15 6.5l4.3-4.3v12l-4.3 4.3z" fill="#c2c2c2"/><g fill="none" stroke="#8a8a8a" stroke-width="1.5"><path d="M8 14.5l-1.5 1.5a2.3 2.3 0 0 1-3.3-3.3l2.7-2.7a2.3 2.3 0 0 1 3.3 0"/><path d="M10 9l1.5-1.5a2.3 2.3 0 0 1 3.3 3.3l-2.7 2.7a2.3 2.3 0 0 1-3.3 0"/></g></svg>
<div style="position:absolute;left:643px;top:1034.7px;width:2px;height:7.3px;background:#cdcdcd"></div>
<svg style="position:absolute;left:664px;top:1010.5px;" width="22" height="21" viewBox="0 0 22 21"><path d="M1 19.5V6l5-5h14v13.5l-5 5z" fill="#d6d6d6" stroke="#6a6a6a" stroke-width="1.4" stroke-linejoin="round"/><path d="M1.7 6l4.6-4.3h13L15 6z" fill="#e8e8e8"/><path d="M15 6.5l4.3-4.3v12l-4.3 4.3z" fill="#c2c2c2"/><g fill="none" stroke="#8a8a8a" stroke-width="1.5"><path d="M8 14.5l-1.5 1.5a2.3 2.3 0 0 1-3.3-3.3l2.7-2.7a2.3 2.3 0 0 1 3.3 0"/><path d="M10 9l1.5-1.5a2.3 2.3 0 0 1 3.3 3.3l-2.7 2.7a2.3 2.3 0 0 1-3.3 0"/></g></svg>
<div style="position:absolute;left:673px;top:1034.7px;width:2px;height:7.3px;background:#cdcdcd"></div>
<svg style="position:absolute;left:694px;top:1010.5px;" width="22" height="21" viewBox="0 0 22 21"><path d="M1 19.5V6l5-5h14v13.5l-5 5z" fill="#d6d6d6" stroke="#6a6a6a" stroke-width="1.4" stroke-linejoin="round"/><path d="M1.7 6l4.6-4.3h13L15 6z" fill="#e8e8e8"/><path d="M15 6.5l4.3-4.3v12l-4.3 4.3z" fill="#c2c2c2"/><g fill="none" stroke="#8a8a8a" stroke-width="1.5"><path d="M8 14.5l-1.5 1.5a2.3 2.3 0 0 1-3.3-3.3l2.7-2.7a2.3 2.3 0 0 1 3.3 0"/><path d="M10 9l1.5-1.5a2.3 2.3 0 0 1 3.3 3.3l-2.7 2.7a2.3 2.3 0 0 1-3.3 0"/></g></svg>
<div style="position:absolute;left:703px;top:1034.7px;width:2px;height:7.3px;background:#cdcdcd"></div>
<svg style="position:absolute;left:724px;top:1010.5px;" width="22" height="21" viewBox="0 0 22 21"><path d="M1 19.5V6l5-5h14v13.5l-5 5z" fill="#d6d6d6" stroke="#6a6a6a" stroke-width="1.4" stroke-linejoin="round"/><path d="M1.7 6l4.6-4.3h13L15 6z" fill="#e8e8e8"/><path d="M15 6.5l4.3-4.3v12l-4.3 4.3z" fill="#c2c2c2"/><g fill="none" stroke="#8a8a8a" stroke-width="1.5"><path d="M8 14.5l-1.5 1.5a2.3 2.3 0 0 1-3.3-3.3l2.7-2.7a2.3 2.3 0 0 1 3.3 0"/><path d="M10 9l1.5-1.5a2.3 2.3 0 0 1 3.3 3.3l-2.7 2.7a2.3 2.3 0 0 1-3.3 0"/></g></svg>
<div style="position:absolute;left:733px;top:1034.7px;width:2px;height:7.3px;background:#cdcdcd"></div>
<svg style="position:absolute;left:754px;top:1010.5px;" width="22" height="21" viewBox="0 0 22 21"><path d="M1 19.5V6l5-5h14v13.5l-5 5z" fill="#d6d6d6" stroke="#6a6a6a" stroke-width="1.4" stroke-linejoin="round"/><path d="M1.7 6l4.6-4.3h13L15 6z" fill="#e8e8e8"/><path d="M15 6.5l4.3-4.3v12l-4.3 4.3z" fill="#c2c2c2"/><g fill="none" stroke="#8a8a8a" stroke-width="1.5"><path d="M8 14.5l-1.5 1.5a2.3 2.3 0 0 1-3.3-3.3l2.7-2.7a2.3 2.3 0 0 1 3.3 0"/><path d="M10 9l1.5-1.5a2.3 2.3 0 0 1 3.3 3.3l-2.7 2.7a2.3 2.3 0 0 1-3.3 0"/></g></svg>
<div style="position:absolute;left:763px;top:1034.7px;width:2px;height:7.3px;background:#cdcdcd"></div>
<svg style="position:absolute;left:784px;top:1010.5px;" width="22" height="21" viewBox="0 0 22 21"><path d="M1 19.5V6l5-5h14v13.5l-5 5z" fill="#d6d6d6" stroke="#6a6a6a" stroke-width="1.4" stroke-linejoin="round"/><path d="M1.7 6l4.6-4.3h13L15 6z" fill="#e8e8e8"/><path d="M15 6.5l4.3-4.3v12l-4.3 4.3z" fill="#c2c2c2"/><g fill="none" stroke="#8a8a8a" stroke-width="1.5"><path d="M8 14.5l-1.5 1.5a2.3 2.3 0 0 1-3.3-3.3l2.7-2.7a2.3 2.3 0 0 1 3.3 0"/><path d="M10 9l1.5-1.5a2.3 2.3 0 0 1 3.3 3.3l-2.7 2.7a2.3 2.3 0 0 1-3.3 0"/></g></svg>
<div style="position:absolute;left:793px;top:1034.7px;width:2px;height:7.3px;background:#cdcdcd"></div>
<svg style="position:absolute;left:814px;top:1010.5px;" width="22" height="21" viewBox="0 0 22 21"><path d="M1 19V6c0-3 2-5 4-5s4 1 4 3v10l-5 5z" fill="#d8d8d8" stroke="#777" stroke-width="1.3"/><path d="M11 8l3-4 5 5v11l-5-5h-3z" fill="#d0d0d0" stroke="#777" stroke-width="1.3"/><path d="M7.5 11v4M12.5 5v4" stroke="#1e90ff" stroke-width="1.6"/></svg>
<div style="position:absolute;left:823px;top:1034.7px;width:2px;height:7.3px;background:#cdcdcd"></div>
<svg style="position:absolute;left:844px;top:1010.5px;" width="22" height="21" viewBox="0 0 22 21"><path d="M1 19V6c0-3 2-5 4-5s4 1 4 3v10l-5 5z" fill="#d8d8d8" stroke="#777" stroke-width="1.3"/><path d="M11 8l3-4 5 5v11l-5-5h-3z" fill="#d0d0d0" stroke="#777" stroke-width="1.3"/><path d="M7.5 11v4M12.5 5v4" stroke="#1e90ff" stroke-width="1.6"/></svg>
<div style="position:absolute;left:853px;top:1034.7px;width:2px;height:7.3px;background:#cdcdcd"></div>
<svg style="position:absolute;left:874px;top:1010.5px;" width="22" height="21" viewBox="0 0 22 21"><path d="M1 19V6c0-3 2-5 4-5s4 1 4 3v10l-5 5z" fill="#d8d8d8" stroke="#777" stroke-width="1.3"/><path d="M11 8l3-4 5 5v11l-5-5h-3z" fill="#d0d0d0" stroke="#777" stroke-width="1.3"/><path d="M7.5 11v4M12.5 5v4" stroke="#1e90ff" stroke-width="1.6"/></svg>
<div style="position:absolute;left:883px;top:1034.7px;width:2px;height:7.3px;background:#cdcdcd"></div>
<svg style="position:absolute;left:904px;top:1010.5px;" width="22" height="21" viewBox="0 0 22 21"><path d="M1 19V6c0-3 2-5 4-5s4 1 4 3v10l-5 5z" fill="#d8d8d8" stroke="#777" stroke-width="1.3"/><path d="M11 8l3-4 5 5v11l-5-5h-3z" fill="#d0d0d0" stroke="#777" stroke-width="1.3"/><path d="M7.5 11v4M12.5 5v4" stroke="#1e90ff" stroke-width="1.6"/></svg>
<div style="position:absolute;left:913px;top:1034.7px;width:2px;height:7.3px;background:#cdcdcd"></div>
<svg style="position:absolute;left:934px;top:1010.5px;" width="22" height="21" viewBox="0 0 22 21"><path d="M1 19V6c0-3 2-5 4-5s4 1 4 3v10l-5 5z" fill="#d8d8d8" stroke="#777" stroke-width="1.3"/><path d="M11 8l3-4 5 5v11l-5-5h-3z" fill="#d0d0d0" stroke="#777" stroke-width="1.3"/><path d="M7.5 11v4M12.5 5v4" stroke="#1e90ff" stroke-width="1.6"/></svg>
<div style="position:absolute;left:943px;top:1034.7px;width:2px;height:7.3px;background:#cdcdcd"></div>
<svg style="position:absolute;left:964px;top:1010.5px;" width="22" height="21" viewBox="0 0 22 21"><rect x="0.8" y="0.8" width="7.4" height="19" fill="#fff" stroke="#666" stroke-width="1.2"/><rect x="8.4" y="0.3" width="11" height="7.7" fill="#69aee5" stroke="#4a8ac4" stroke-width="0.6"/></svg>
<div style="position:absolute;left:973px;top:1034.7px;width:2px;height:7.3px;background:#cdcdcd"></div>
<svg style="position:absolute;left:994.5px;top:1010.5px;" width="22" height="21" viewBox="0 0 22 21"><path d="M1 19V7c0-3 2-6 5-6s5 2 5 4v2l2-2c1 0 2 1 2 3v11l-4-4-3 3-2-2-5 5z" fill="#d8d8d8" stroke="#777" stroke-width="1.3" stroke-linejoin="round"/><path d="M6 7v10" stroke="#999" stroke-width="0.9"/></svg>
<div style="position:absolute;left:1003px;top:1034.7px;width:2px;height:7.3px;background:#cdcdcd"></div>
<svg style="position:absolute;left:1024.5px;top:1010.5px;" width="22" height="21" viewBox="0 0 22 21"><path d="M1 19V7c0-3 2-6 5-6s5 2 5 4v2l2-2c1 0 2 1 2 3v11l-4-4-3 3-2-2-5 5z" fill="#d8d8d8" stroke="#777" stroke-width="1.3" stroke-linejoin="round"/><path d="M6 7v10" stroke="#999" stroke-width="0.9"/></svg>
<div style="position:absolute;left:1033px;top:1034.7px;width:2px;height:7.3px;background:#cdcdcd"></div>
<svg style="position:absolute;left:1054.5px;top:1010.5px;" width="22" height="21" viewBox="0 0 22 21"><path d="M1 19V7c0-3 2-6 5-6s5 2 5 4v2l2-2c1 0 2 1 2 3v11l-4-4-3 3-2-2-5 5z" fill="#d8d8d8" stroke="#777" stroke-width="1.3" stroke-linejoin="round"/><path d="M6 7v10" stroke="#999" stroke-width="0.9"/></svg>
<div style="position:absolute;left:1063px;top:1034.7px;width:2px;height:7.3px;background:#cdcdcd"></div>
<svg style="position:absolute;left:1084.5px;top:1010.5px;" width="22" height="21" viewBox="0 0 22 21"><path d="M1 19V7c0-3 2-6 5-6s5 2 5 4v2l2-2c1 0 2 1 2 3v11l-4-4-3 3-2-2-5 5z" fill="#d8d8d8" stroke="#777" stroke-width="1.3" stroke-linejoin="round"/><path d="M6 7v10" stroke="#999" stroke-width="0.9"/></svg>
<div style="position:absolute;left:1093px;top:1034.7px;width:2px;height:7.3px;background:#cdcdcd"></div>
<svg style="position:absolute;left:1114px;top:1010.5px;" width="22" height="21" viewBox="0 0 22 21"><rect x="0.8" y="0.8" width="7.4" height="19" fill="#fff" stroke="#666" stroke-width="1.2"/><rect x="8.4" y="0.3" width="11" height="7.7" fill="#69aee5" stroke="#4a8ac4" stroke-width="0.6"/></svg>
<div style="position:absolute;left:1123px;top:1034.7px;width:2px;height:7.3px;background:#cdcdcd"></div>
<svg style="position:absolute;left:1144.5px;top:1010.5px;" width="22" height="21" viewBox="0 0 22 21"><path d="M1 19V7c0-3 2-6 5-6s5 2 5 4v2l2-2c1 0 2 1 2 3v11l-4-4-3 3-2-2-5 5z" fill="#d8d8d8" stroke="#777" stroke-width="1.3" stroke-linejoin="round"/><path d="M6 7v10" stroke="#999" stroke-width="0.9"/></svg>
<div style="position:absolute;left:1153px;top:1034.7px;width:2px;height:7.3px;background:#cdcdcd"></div>
<svg style="position:absolute;left:1174px;top:1010.5px;" width="22" height="21" viewBox="0 0 22 21"><path d="M1 19V6c0-3 2-5 4-5s4 1 4 3v10l-5 5z" fill="#d8d8d8" stroke="#777" stroke-width="1.3"/><path d="M11 8l3-4 5 5v11l-5-5h-3z" fill="#d0d0d0" stroke="#777" stroke-width="1.3"/><path d="M7.5 11v4M12.5 5v4" stroke="#1e90ff" stroke-width="1.6"/></svg>
<div style="position:absolute;left:1183px;top:1034.7px;width:2px;height:7.3px;background:#cdcdcd"></div>
<svg style="position:absolute;left:1204.5px;top:1010.5px;" width="22" height="21" viewBox="0 0 22 21"><path d="M1 19V7c0-3 2-6 5-6s5 2 5 4v2l2-2c1 0 2 1 2 3v11l-4-4-3 3-2-2-5 5z" fill="#d8d8d8" stroke="#777" stroke-width="1.3" stroke-linejoin="round"/><path d="M6 7v10" stroke="#999" stroke-width="0.9"/></svg>
<div style="position:absolute;left:1213px;top:1034.7px;width:2px;height:7.3px;background:#cdcdcd"></div>
<svg style="position:absolute;left:1234.5px;top:1010.5px;" width="22" height="21" viewBox="0 0 22 21"><path d="M1 19V7c0-3 2-6 5-6s5 2 5 4v2l2-2c1 0 2 1 2 3v11l-4-4-3 3-2-2-5 5z" fill="#d8d8d8" stroke="#777" stroke-width="1.3" stroke-linejoin="round"/><path d="M6 7v10" stroke="#999" stroke-width="0.9"/></svg>
<div style="position:absolute;left:1243px;top:1034.7px;width:2px;height:7.3px;background:#cdcdcd"></div>
<svg style="position:absolute;left:1264px;top:1010.5px;" width="22" height="21" viewBox="0 0 22 21"><path d="M1 19V6c0-3 2-5 4-5s4 1 4 3v10l-5 5z" fill="#d8d8d8" stroke="#777" stroke-width="1.3"/><path d="M11 8l3-4 5 5v11l-5-5h-3z" fill="#d0d0d0" stroke="#777" stroke-width="1.3"/><path d="M7.5 11v4M12.5 5v4" stroke="#1e90ff" stroke-width="1.6"/></svg>
<div style="position:absolute;left:1273px;top:1034.7px;width:2px;height:7.3px;background:#cdcdcd"></div>
<svg style="position:absolute;left:1280.8px;top:1003px;" width="15" height="39" viewBox="0 0 15 39"><path d="M0 0h15v5.5L8.9 11.5V39H6.2V11.5L0 5.5z" fill="#636363"/></svg>
<svg style="position:absolute;left:1880.5px;top:1012px;" width="20" height="20" viewBox="0 0 20 20"><polygon points="19.95,10.98 19.57,12.90 16.17,13.30 15.41,14.44 16.34,17.73 14.71,18.82 12.03,16.70 10.69,16.97 9.02,19.95 7.10,19.57 6.70,16.17 5.56,15.41 2.27,16.34 1.18,14.71 3.30,12.03 3.03,10.69 0.05,9.02 0.43,7.10 3.83,6.70 4.59,5.56 3.66,2.27 5.29,1.18 7.97,3.30 9.31,3.03 10.98,0.05 12.90,0.43 13.30,3.83 14.44,4.59 17.73,3.66 18.82,5.29 16.70,7.97 16.97,9.31" fill="#9a9a9a"/><circle cx="10" cy="10" r="3.6" fill="#f1f1f1"/></svg>
<div style="position:absolute;left:0px;top:1042px;width:1920px;height:38px;background:linear-gradient(90deg,#3a3a3c 0%,#37383b 45%,#34363b 66%,#2b2e37 80%,#252a36 100%)"></div>
<div style="position:absolute;left:1914px;top:1042px;width:1px;height:38px;background:#6b6f78"></div>
<svg style="position:absolute;left:12px;top:1051px;" width="20.5" height="20" viewBox="0 0 20.5 20"><path d="M0 2.8L8.3 1.6v7.9H0zM9.3 1.5L20.5 0v9.5H9.3zM0 10.5h8.3v7.9L0 17.2zM9.3 10.5h11.2V20L9.3 18.5z" fill="#fff"/></svg>
<svg style="position:absolute;left:57px;top:1051px;" width="20" height="20" viewBox="0 0 20 20"><circle cx="12.2" cy="7.8" r="6.6" fill="none" stroke="#fff" stroke-width="1.5"/><path d="M7.5 12.5L0.8 19.2" stroke="#fff" stroke-width="1.6"/></svg>
<svg style="position:absolute;left:102px;top:1051px;" width="20" height="20" viewBox="0 0 20 20"><circle cx="10" cy="10" r="8.3" fill="none" stroke="#fff" stroke-width="2.6"/></svg>
<svg style="position:absolute;left:146px;top:1051px;" width="21" height="20" viewBox="0 0 21 20"><path d="M0.8 1.5h8.3M0.8 18.5h8.3M2 4.5h8.5v11H2z" fill="none" stroke="#fff" stroke-width="1.3"/><path d="M13 1v18" stroke="#fff" stroke-width="1.3"/><rect x="11.8" y="7" width="3" height="3.5" fill="#fff"/><path d="M19.5 1v18" stroke="#fff" stroke-width="1.3"/></svg>
<svg style="position:absolute;left:197px;top:1052px;" width="19" height="18" viewBox="0 0 19 18"><path d="M0 2a1 1 0 0 1 1-1h6l2 2h9a1 1 0 0 1 1 1v3H0z" fill="#e0a526"/><path d="M0 5h19v12a1 1 0 0 1-1 1H1a1 1 0 0 1-1-1z" fill="#ffd45c"/><path d="M5 18v-6h9v6h-2.5v-3.5h-4V18z" fill="#1f7fd8"/></svg>
<svg style="position:absolute;left:242px;top:1051px;" width="20" height="20" viewBox="0 0 20 20"><defs><linearGradient id="edg" x1="0" y1="0" x2="1" y2="1"><stop offset="0" stop-color="#35c1f1"/><stop offset="0.6" stop-color="#1b8bd6"/><stop offset="1" stop-color="#0c59a4"/></linearGradient></defs><circle cx="10" cy="10" r="10" fill="url(#edg)"/><path d="M10 0a10 10 0 0 1 10 10c0 3-2 5-5 5-2 0-4-1-4-3s2-2 2-3c0-3-3-5-6-5-3 0-5 2-7 4C1 3 5 0 10 0z" fill="#4dd06f"/><circle cx="11" cy="11" r="3.5" fill="#39393b"/></svg>
<svg style="position:absolute;left:288px;top:1051px;" width="20" height="20" viewBox="0 0 20 20"><rect width="20" height="20" fill="#111"/><rect x="3" y="13" width="3" height="2" fill="#f0a030"/><rect x="7" y="11" width="3" height="4" fill="#e05050"/><rect x="11" y="9" width="3" height="6" fill="#c050c0"/><rect x="15" y="5" width="3" height="10" fill="#40c0a0"/></svg>
<svg style="position:absolute;left:334px;top:1051px;" width="20" height="20" viewBox="0 0 20 20"><circle cx="10" cy="10" r="10" fill="#5865f2"/><path d="M5 13.5c0-3 1-5.5 2-6.5 1.5-.7 2-.7 3-.7s1.5 0 3 .7c1 1 2 3.5 2 6.5-1 .8-2 1.2-3 1.3l-.7-1c-.8.2-1.6.2-2.6 0l-.7 1C7 14.7 6 14.3 5 13.5z" fill="#fff"/><circle cx="8.3" cy="11" r="1.1" fill="#5865f2"/><circle cx="11.7" cy="11" r="1.1" fill="#5865f2"/></svg>
<div style="position:absolute;left:327px;top:1077px;width:35px;height:3px;background:#a8c8f0"></div>
<svg style="position:absolute;left:380px;top:1051px;" width="20" height="20" viewBox="0 0 20 20"><rect x="6" y="0" width="14" height="20" rx="1" fill="#2b7cd3"/><rect x="6" y="0" width="14" height="5" fill="#41a5ee"/><rect x="6" y="5" width="14" height="5" fill="#2b7cd3"/><rect x="6" y="10" width="14" height="5" fill="#185abd"/><rect x="6" y="15" width="14" height="5" fill="#103f91"/><rect x="0" y="4" width="11" height="12" fill="#185abd"/><path d="M2 6.5l1.5 7 1.5-5 1.5 5 1.5-7" fill="none" stroke="#fff" stroke-width="1.3"/></svg>
<svg style="position:absolute;left:427.5px;top:1051px;" width="17" height="20" viewBox="0 0 17 20"><path d="M7 0h3l5 17H2z" fill="#ff8800"/><path d="M4.5 8h8l1 3.5h-10z" fill="#fff"/><rect x="0" y="17" width="17" height="3" rx="1" fill="#ff8800"/></svg>
<svg style="position:absolute;left:472px;top:1051px;" width="20" height="20" viewBox="0 0 20 20"><rect width="20" height="20" fill="#f4e7e2"/><path d="M3 18L9 2h3l6 16h-3.5L13 14H8l-1.5 4z M9 11h3.5L10.7 5.5z" fill="#c8202f"/></svg>
<svg style="position:absolute;left:518px;top:1051px;" width="20" height="20" viewBox="0 0 20 20"><circle cx="10" cy="10" r="9.5" fill="#1a8fe6"/><circle cx="10" cy="10" r="8" fill="#fff"/><circle cx="10" cy="10" r="6.5" fill="#39a6f0"/><circle cx="10" cy="10" r="3.3" fill="#222"/></svg>
<svg style="position:absolute;left:564px;top:1051px;" width="20" height="20" viewBox="0 0 20 20"><defs><radialGradient id="ffg" cx="0.6" cy="0.2" r="0.9"><stop offset="0" stop-color="#ffe226"/><stop offset="0.5" stop-color="#ff7139"/><stop offset="1" stop-color="#e31587"/></radialGradient></defs><circle cx="10" cy="11" r="9" fill="url(#ffg)"/><circle cx="9.5" cy="11.5" r="5" fill="#7542e5"/><path d="M13 0c3 3 5 6 5 9l-4-2z" fill="#ffbd4f"/></svg>
<div style="position:absolute;left:557px;top:1077px;width:35px;height:3px;background:#a8c8f0"></div>
<svg style="position:absolute;left:610px;top:1051px;" width="20" height="20" viewBox="0 0 20 20"><rect width="20" height="20" fill="#131722"/><path d="M3 6h7v3H8v6H5V9H3z M10.5 9.5a1.5 1.5 0 1 1 3 0 1.5 1.5 0 0 1-3 0z M13 15l4-9h-3l-4 9z" fill="#fff"/></svg>
<svg style="position:absolute;left:656px;top:1051px;" width="20" height="20" viewBox="0 0 20 20"><rect width="20" height="20" fill="#f8dcc0"/><path d="M6 3h8v2.5h-2.5v9H14V17H6v-2.5h2.5v-9H6z" fill="#d4893a"/><text x="13" y="19" font-size="3" fill="#c07030" font-family="Liberation Sans">PRO</text></svg>
<div style="position:absolute;left:690px;top:1042px;width:45px;height:38px;background:#5b5c60"></div>
<svg style="position:absolute;left:701px;top:1051px;" width="20" height="20" viewBox="0 0 20 20"><rect width="20" height="20" fill="#f8dcc0"/><path d="M6 3.5h8v3h-4.6v2.6h4v2.8h-4v4.6H6z" fill="#e08a30"/><text x="12.5" y="19" font-size="3" fill="#c07030" font-family="Liberation Sans">360</text></svg>
<div style="position:absolute;left:690px;top:1077px;width:45px;height:3px;background:#a8c8f0"></div>
<svg style="position:absolute;left:1428px;top:1050px;" width="28" height="19" viewBox="0 0 28 19"><path d="M6 18a5.5 5.5 0 0 1-1-10.9A7 7 0 0 1 18 4.5a5.5 5.5 0 0 1 4 .5 6.5 6.5 0 0 1 0 13z" fill="#9fd4f7"/><path d="M6 18a5.5 5.5 0 0 1-1-10.9A7 7 0 0 1 18 4.5" fill="none" stroke="#d8efff" stroke-width="1.2"/></svg>
<div style="position:absolute;left:1466px;top:1053.56px;font-family:'Liberation Sans',sans-serif;font-size:18px;line-height:18px;font-weight:400;color:#fff;white-space:pre;transform:scaleX(0.9697);transform-origin:0 0;">27°C</div>
<div style="position:absolute;left:1514.5px;top:1053.56px;font-family:'Liberation Sans',sans-serif;font-size:18px;line-height:18px;font-weight:400;color:#fff;white-space:pre;transform:scaleX(0.9816);transform-origin:0 0;">Cloudy</div>
<svg style="position:absolute;left:1588px;top:1054px;" width="17" height="10" viewBox="0 0 17 10"><path d="M1 9l7.5-7.5L16 9" fill="none" stroke="#fff" stroke-width="1.4"/></svg>
<svg style="position:absolute;left:1629px;top:1052px;" width="16" height="16" viewBox="0 0 16 16"><path d="M1.5 15a13.5 13.5 0 0 1 13.5-13.5M4.5 15a10.5 10.5 0 0 1 10.5-10.5M7.5 15a7.5 7.5 0 0 1 7.5-7.5M10.5 15a4.5 4.5 0 0 1 4.5-4.5" fill="none" stroke="#fff" stroke-width="1.1"/><circle cx="14" cy="14" r="1.6" fill="#fff"/></svg>
<svg style="position:absolute;left:1666px;top:1055px;" width="21" height="12" viewBox="0 0 21 12"><rect x="0.7" y="0.7" width="17.6" height="10.6" fill="none" stroke="#fff" stroke-width="1.3"/><rect x="2.5" y="2.5" width="14" height="7" fill="#fff"/><rect x="18.5" y="3.5" width="2" height="5" fill="#fff"/></svg>
<svg style="position:absolute;left:1705px;top:1053px;" width="22" height="17" viewBox="0 0 22 17"><path d="M1 5.5h3.5L9 1.5v14L4.5 11.5H1z" fill="none" stroke="#fff" stroke-width="1.2" stroke-linejoin="round"/><path d="M12 6a3 3 0 0 1 0 5M15 3.5a6.5 6.5 0 0 1 0 10M18 1a10 10 0 0 1 0 15" fill="none" stroke="#fff" stroke-width="1.2"/></svg>
<svg style="position:absolute;left:1746px;top:1051px;" width="21" height="20" viewBox="0 0 21 20"><path d="M15 1.5l3.5 3.5L8 15.5l-4 1 1-4z" fill="none" stroke="#fff" stroke-width="1.2"/><path d="M4 11c-3 1-4 4-3 6s4 2 6 0M12 5c3-1 7 0 8 2" fill="none" stroke="#fff" stroke-width="1.2"/></svg>
<div style="position:absolute;left:1785.8px;top:1054.48px;font-family:'Liberation Sans',sans-serif;font-size:15.5px;line-height:15.5px;font-weight:400;color:#fff;white-space:pre;transform:scaleX(0.8846);transform-origin:0 0;">10:13 PM</div>
<svg style="position:absolute;left:1868.5px;top:1051px;" width="21" height="21" viewBox="0 0 21 21"><path d="M0 0h20.5v16.5H12.5l-2.25 3.5-2.25-3.5H0z" fill="#fff"/><path d="M4 4h12.5M4 8h12.5M4 12h8" stroke="#2b2f3a" stroke-width="1.2"/></svg>
</body></html>
